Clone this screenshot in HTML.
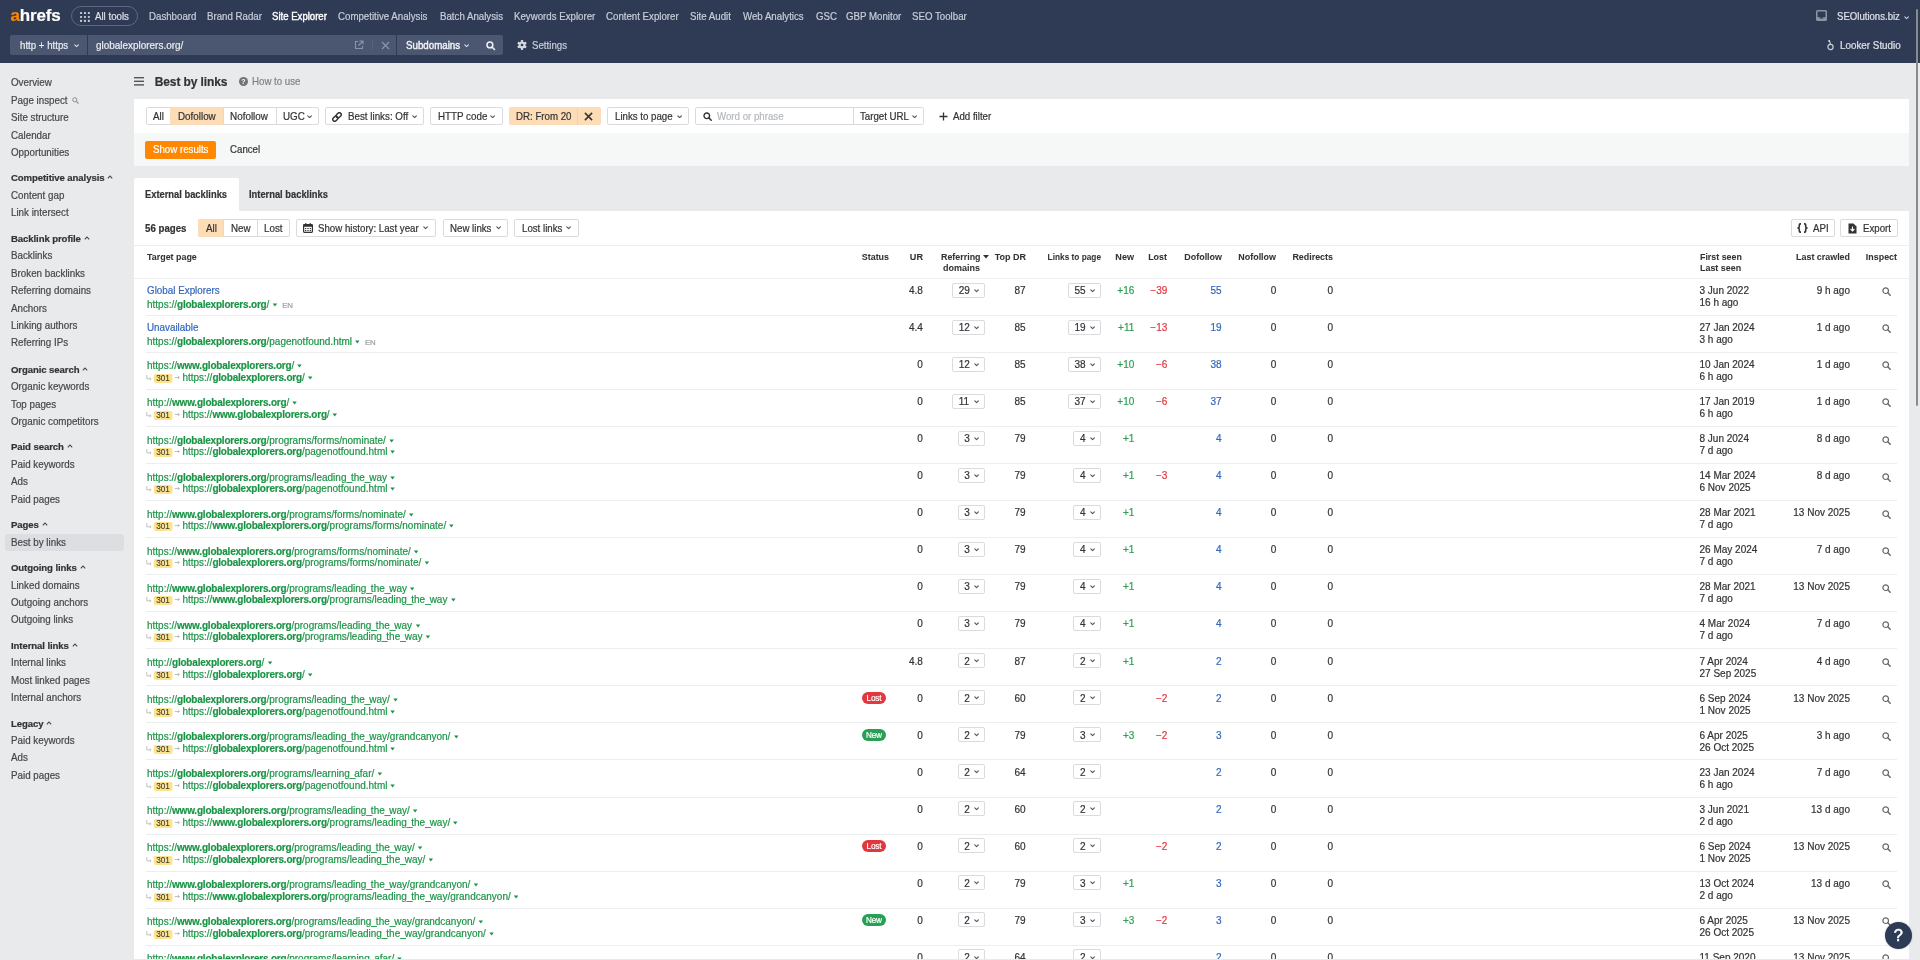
<!DOCTYPE html>
<html><head><meta charset="utf-8"><style>
html,body{margin:0;padding:0;}
body{width:1920px;height:960px;overflow:hidden;position:relative;-webkit-font-smoothing:antialiased;background:#e9eaec;font-family:"Liberation Sans",sans-serif;}
.t{position:absolute;white-space:nowrap;-webkit-text-stroke:0.2px currentColor;}
.r{position:absolute;}
b{font-weight:700;}
</style></head><body><div id="w" style="position:absolute;left:0;top:0;width:1920px;height:960px;will-change:transform;">
<div class="r" style="left:0.00px;top:0.00px;width:1920.00px;height:63.00px;background:#2f3a55;"></div>
<div class="t" style="top:9.00px;font-size:17px;line-height:14px;color:#fff;font-weight:700;letter-spacing:-0.15px;left:10.50px;"><span style="color:#ff8800">a</span>hrefs</div>
<div class="r" style="left:71.00px;top:6.00px;width:67.00px;height:20.00px;border:1px solid #5d6780;border-radius:11px;box-sizing:border-box;"></div>
<svg class="r" style="left:80.00px;top:11.50px" width="10" height="10" viewBox="0 0 10 10"><rect x="0" y="0" width="2.1" height="2.1" rx="0.7" fill="#c6cbd4"/><rect x="0" y="3.9" width="2.1" height="2.1" rx="0.7" fill="#c6cbd4"/><rect x="0" y="7.8" width="2.1" height="2.1" rx="0.7" fill="#c6cbd4"/><rect x="3.9" y="0" width="2.1" height="2.1" rx="0.7" fill="#c6cbd4"/><rect x="3.9" y="3.9" width="2.1" height="2.1" rx="0.7" fill="#c6cbd4"/><rect x="3.9" y="7.8" width="2.1" height="2.1" rx="0.7" fill="#c6cbd4"/><rect x="7.8" y="0" width="2.1" height="2.1" rx="0.7" fill="#c6cbd4"/><rect x="7.8" y="3.9" width="2.1" height="2.1" rx="0.7" fill="#c6cbd4"/><rect x="7.8" y="7.8" width="2.1" height="2.1" rx="0.7" fill="#c6cbd4"/></svg>
<div class="t" style="top:10.00px;font-size:10.2px;line-height:14px;color:#dfe2e8;left:95.00px;transform:scaleX(0.9510);transform-origin:left 50%;">All tools</div>
<div class="t" style="top:10.00px;font-size:10.2px;line-height:14px;color:#c9ced8;left:148.70px;transform:scaleX(0.9510);transform-origin:left 50%;">Dashboard</div>
<div class="t" style="top:10.00px;font-size:10.2px;line-height:14px;color:#c9ced8;left:207.00px;transform:scaleX(0.9510);transform-origin:left 50%;">Brand Radar</div>
<div class="t" style="top:10.00px;font-size:10.2px;line-height:14px;color:#ffffff;left:271.70px;transform:scaleX(0.9412);transform-origin:left 50%;-webkit-text-stroke:0.4px currentColor;">Site Explorer</div>
<div class="t" style="top:10.00px;font-size:10.2px;line-height:14px;color:#c9ced8;left:337.70px;transform:scaleX(0.9510);transform-origin:left 50%;">Competitive Analysis</div>
<div class="t" style="top:10.00px;font-size:10.2px;line-height:14px;color:#c9ced8;left:439.70px;transform:scaleX(0.9510);transform-origin:left 50%;">Batch Analysis</div>
<div class="t" style="top:10.00px;font-size:10.2px;line-height:14px;color:#c9ced8;left:514.30px;transform:scaleX(0.9510);transform-origin:left 50%;">Keywords Explorer</div>
<div class="t" style="top:10.00px;font-size:10.2px;line-height:14px;color:#c9ced8;left:606.00px;transform:scaleX(0.9510);transform-origin:left 50%;">Content Explorer</div>
<div class="t" style="top:10.00px;font-size:10.2px;line-height:14px;color:#c9ced8;left:690.30px;transform:scaleX(0.9510);transform-origin:left 50%;">Site Audit</div>
<div class="t" style="top:10.00px;font-size:10.2px;line-height:14px;color:#c9ced8;left:743.00px;transform:scaleX(0.9510);transform-origin:left 50%;">Web Analytics</div>
<div class="t" style="top:10.00px;font-size:10.2px;line-height:14px;color:#c9ced8;left:815.70px;transform:scaleX(0.9510);transform-origin:left 50%;">GSC</div>
<div class="t" style="top:10.00px;font-size:10.2px;line-height:14px;color:#c9ced8;left:846.30px;transform:scaleX(0.9510);transform-origin:left 50%;">GBP Monitor</div>
<div class="t" style="top:10.00px;font-size:10.2px;line-height:14px;color:#c9ced8;left:912.30px;transform:scaleX(0.9510);transform-origin:left 50%;">SEO Toolbar</div>
<svg class="r" style="left:1815.50px;top:10.00px" width="11" height="11" viewBox="0 0 11 11"><rect x="0.75" y="0.75" width="9.5" height="9.5" rx="0.8" fill="none" stroke="#8d94a3" stroke-width="1.5"/><rect x="0.75" y="7.2" width="9.5" height="3" fill="#8d94a3"/><rect x="3.8" y="7.2" width="3.4" height="1.3" fill="#2f3a55"/></svg>
<div class="t" style="top:10.00px;font-size:10.2px;line-height:14px;color:#dfe2e8;left:1837.00px;transform:scaleX(0.9412);transform-origin:left 50%;">SEOlutions.biz</div>
<svg class="r" style="left:1904.00px;top:16.00px" width="5.2" height="3.6" viewBox="0 0 5.2 3.6"><path d="M0.8 0.8 L2.6 2.7 L4.4 0.8" fill="none" stroke="#c9ced8" stroke-width="1.1" stroke-linecap="round" stroke-linejoin="round"/></svg>
<div class="r" style="left:10.00px;top:35.00px;width:493.00px;height:20.00px;background:#4b5670;border-radius:2px;"></div>
<div class="r" style="left:87.00px;top:35.00px;width:1.00px;height:20.00px;background:#2f3a55;"></div>
<div class="r" style="left:395.50px;top:35.00px;width:1.00px;height:20.00px;background:#2f3a55;"></div>
<div class="t" style="top:38.50px;font-size:10.2px;line-height:14px;color:#eceef2;left:19.50px;transform:scaleX(0.9510);transform-origin:left 50%;">http + https</div>
<svg class="r" style="left:74.00px;top:43.80px" width="5.2" height="3.6" viewBox="0 0 5.2 3.6"><path d="M0.8 0.8 L2.6 2.7 L4.4 0.8" fill="none" stroke="#d6dae2" stroke-width="1.1" stroke-linecap="round" stroke-linejoin="round"/></svg>
<div class="t" style="top:38.50px;font-size:10.2px;line-height:14px;color:#eceef2;left:95.80px;transform:scaleX(0.9755);transform-origin:left 50%;">globalexplorers.org/</div>
<svg class="r" style="left:354.00px;top:39.50px" width="10" height="10" viewBox="0 0 10 10"><path d="M4 1.5 H1.5 V8.5 H8.5 V6" fill="none" stroke="#8b93a6" stroke-width="1.1"/><path d="M5.5 1 H9 V4.5 M9 1 L4.5 5.5" fill="none" stroke="#8b93a6" stroke-width="1.1"/></svg>
<div class="r" style="left:372.00px;top:40.00px;width:1.00px;height:10.00px;background:#56617a;"></div>
<svg class="r" style="left:380.50px;top:40.50px" width="9" height="9" viewBox="0 0 9 9"><path d="M1 1 L8 8 M8 1 L1 8" stroke="#8b93a6" stroke-width="1.3"/></svg>
<div class="t" style="top:38.50px;font-size:10.2px;line-height:14px;color:#f2f3f6;left:405.60px;transform:scaleX(0.9559);transform-origin:left 50%;-webkit-text-stroke:0.4px currentColor;">Subdomains</div>
<svg class="r" style="left:464.00px;top:43.80px" width="5.2" height="3.6" viewBox="0 0 5.2 3.6"><path d="M0.8 0.8 L2.6 2.7 L4.4 0.8" fill="none" stroke="#d6dae2" stroke-width="1.1" stroke-linecap="round" stroke-linejoin="round"/></svg>
<svg class="r" style="left:486.00px;top:40.50px" width="10" height="10" viewBox="0 0 10 10"><circle cx="3.9" cy="3.9" r="2.9" fill="none" stroke="#eef0f4" stroke-width="1.5"/><path d="M6 6 L8.5 8.5" stroke="#eef0f4" stroke-width="1.6" stroke-linecap="round"/></svg>
<svg class="r" style="left:517.00px;top:40.00px" width="10" height="10" viewBox="0 0 10 10"><g fill="#d3d7de"><circle cx="5" cy="5" r="3.5"/><rect x="3.9" y="0.1" width="2.2" height="9.8" rx="0.4" transform="rotate(0 5 5)"/><rect x="3.9" y="0.1" width="2.2" height="9.8" rx="0.4" transform="rotate(60 5 5)"/><rect x="3.9" y="0.1" width="2.2" height="9.8" rx="0.4" transform="rotate(120 5 5)"/></g><circle cx="5" cy="5" r="1.3" fill="#2f3a55"/></svg>
<div class="t" style="top:38.50px;font-size:10.2px;line-height:14px;color:#c9ced8;left:532.00px;transform:scaleX(0.9510);transform-origin:left 50%;">Settings</div>
<svg class="r" style="left:1826.50px;top:38.50px" width="7" height="12" viewBox="0 0 7 12"><circle cx="3.5" cy="8" r="2.6" fill="none" stroke="#c9ced8" stroke-width="1.2"/><path d="M2 1 L3.5 5" stroke="#c9ced8" stroke-width="1.2"/><circle cx="2.2" cy="2" r="1" fill="#c9ced8"/></svg>
<div class="t" style="top:38.50px;font-size:10.2px;line-height:14px;color:#dfe2e8;left:1839.70px;transform:scaleX(0.9657);transform-origin:left 50%;">Looker Studio</div>
<div class="t" style="top:76.20px;font-size:10.2px;line-height:14px;color:#45474b;left:11.00px;transform:scaleX(0.9608);transform-origin:left 50%;">Overview</div>
<div class="t" style="top:93.70px;font-size:10.2px;line-height:14px;color:#45474b;left:11.00px;transform:scaleX(0.9608);transform-origin:left 50%;">Page inspect</div>
<div class="t" style="top:111.10px;font-size:10.2px;line-height:14px;color:#45474b;left:11.00px;transform:scaleX(0.9608);transform-origin:left 50%;">Site structure</div>
<div class="t" style="top:128.50px;font-size:10.2px;line-height:14px;color:#45474b;left:11.00px;transform:scaleX(0.9608);transform-origin:left 50%;">Calendar</div>
<div class="t" style="top:146.00px;font-size:10.2px;line-height:14px;color:#45474b;left:11.00px;transform:scaleX(0.9608);transform-origin:left 50%;">Opportunities</div>
<div class="t" style="top:171.30px;font-size:9.6px;line-height:14px;color:#333;font-weight:700;letter-spacing:-0.1px;left:11.00px;">Competitive analysis<svg width="6" height="4" viewBox="0 0 6 4" style="margin-left:3px;vertical-align:2px"><path d="M0.8 3.4 L3 1 L5.2 3.4" fill="none" stroke="#444" stroke-width="1.1"/></svg></div>
<div class="t" style="top:188.70px;font-size:10.2px;line-height:14px;color:#45474b;left:11.00px;transform:scaleX(0.9608);transform-origin:left 50%;">Content gap</div>
<div class="t" style="top:206.20px;font-size:10.2px;line-height:14px;color:#45474b;left:11.00px;transform:scaleX(0.9608);transform-origin:left 50%;">Link intersect</div>
<div class="t" style="top:231.70px;font-size:9.6px;line-height:14px;color:#333;font-weight:700;letter-spacing:-0.1px;left:11.00px;">Backlink profile<svg width="6" height="4" viewBox="0 0 6 4" style="margin-left:3px;vertical-align:2px"><path d="M0.8 3.4 L3 1 L5.2 3.4" fill="none" stroke="#444" stroke-width="1.1"/></svg></div>
<div class="t" style="top:249.20px;font-size:10.2px;line-height:14px;color:#45474b;left:11.00px;transform:scaleX(0.9608);transform-origin:left 50%;">Backlinks</div>
<div class="t" style="top:266.60px;font-size:10.2px;line-height:14px;color:#45474b;left:11.00px;transform:scaleX(0.9608);transform-origin:left 50%;">Broken backlinks</div>
<div class="t" style="top:284.10px;font-size:10.2px;line-height:14px;color:#45474b;left:11.00px;transform:scaleX(0.9608);transform-origin:left 50%;">Referring domains</div>
<div class="t" style="top:301.50px;font-size:10.2px;line-height:14px;color:#45474b;left:11.00px;transform:scaleX(0.9608);transform-origin:left 50%;">Anchors</div>
<div class="t" style="top:319.00px;font-size:10.2px;line-height:14px;color:#45474b;left:11.00px;transform:scaleX(0.9608);transform-origin:left 50%;">Linking authors</div>
<div class="t" style="top:336.40px;font-size:10.2px;line-height:14px;color:#45474b;left:11.00px;transform:scaleX(0.9608);transform-origin:left 50%;">Referring IPs</div>
<div class="t" style="top:362.70px;font-size:9.6px;line-height:14px;color:#333;font-weight:700;letter-spacing:-0.1px;left:11.00px;">Organic search<svg width="6" height="4" viewBox="0 0 6 4" style="margin-left:3px;vertical-align:2px"><path d="M0.8 3.4 L3 1 L5.2 3.4" fill="none" stroke="#444" stroke-width="1.1"/></svg></div>
<div class="t" style="top:380.10px;font-size:10.2px;line-height:14px;color:#45474b;left:11.00px;transform:scaleX(0.9608);transform-origin:left 50%;">Organic keywords</div>
<div class="t" style="top:397.60px;font-size:10.2px;line-height:14px;color:#45474b;left:11.00px;transform:scaleX(0.9608);transform-origin:left 50%;">Top pages</div>
<div class="t" style="top:415.00px;font-size:10.2px;line-height:14px;color:#45474b;left:11.00px;transform:scaleX(0.9608);transform-origin:left 50%;">Organic competitors</div>
<div class="t" style="top:440.30px;font-size:9.6px;line-height:14px;color:#333;font-weight:700;letter-spacing:-0.1px;left:11.00px;">Paid search<svg width="6" height="4" viewBox="0 0 6 4" style="margin-left:3px;vertical-align:2px"><path d="M0.8 3.4 L3 1 L5.2 3.4" fill="none" stroke="#444" stroke-width="1.1"/></svg></div>
<div class="t" style="top:457.80px;font-size:10.2px;line-height:14px;color:#45474b;left:11.00px;transform:scaleX(0.9608);transform-origin:left 50%;">Paid keywords</div>
<div class="t" style="top:475.20px;font-size:10.2px;line-height:14px;color:#45474b;left:11.00px;transform:scaleX(0.9608);transform-origin:left 50%;">Ads</div>
<div class="t" style="top:492.70px;font-size:10.2px;line-height:14px;color:#45474b;left:11.00px;transform:scaleX(0.9608);transform-origin:left 50%;">Paid pages</div>
<div class="t" style="top:518.00px;font-size:9.6px;line-height:14px;color:#333;font-weight:700;letter-spacing:-0.1px;left:11.00px;">Pages<svg width="6" height="4" viewBox="0 0 6 4" style="margin-left:3px;vertical-align:2px"><path d="M0.8 3.4 L3 1 L5.2 3.4" fill="none" stroke="#444" stroke-width="1.1"/></svg></div>
<div class="r" style="left:5.00px;top:534.00px;width:118.70px;height:16.70px;background:#dcdee2;border-radius:3px;"></div>
<div class="t" style="top:535.50px;font-size:10.2px;line-height:14px;color:#45474b;left:11.00px;transform:scaleX(0.9608);transform-origin:left 50%;">Best by links</div>
<div class="t" style="top:561.00px;font-size:9.6px;line-height:14px;color:#333;font-weight:700;letter-spacing:-0.1px;left:11.00px;">Outgoing links<svg width="6" height="4" viewBox="0 0 6 4" style="margin-left:3px;vertical-align:2px"><path d="M0.8 3.4 L3 1 L5.2 3.4" fill="none" stroke="#444" stroke-width="1.1"/></svg></div>
<div class="t" style="top:578.50px;font-size:10.2px;line-height:14px;color:#45474b;left:11.00px;transform:scaleX(0.9608);transform-origin:left 50%;">Linked domains</div>
<div class="t" style="top:595.90px;font-size:10.2px;line-height:14px;color:#45474b;left:11.00px;transform:scaleX(0.9608);transform-origin:left 50%;">Outgoing anchors</div>
<div class="t" style="top:613.40px;font-size:10.2px;line-height:14px;color:#45474b;left:11.00px;transform:scaleX(0.9608);transform-origin:left 50%;">Outgoing links</div>
<div class="t" style="top:638.70px;font-size:9.6px;line-height:14px;color:#333;font-weight:700;letter-spacing:-0.1px;left:11.00px;">Internal links<svg width="6" height="4" viewBox="0 0 6 4" style="margin-left:3px;vertical-align:2px"><path d="M0.8 3.4 L3 1 L5.2 3.4" fill="none" stroke="#444" stroke-width="1.1"/></svg></div>
<div class="t" style="top:656.10px;font-size:10.2px;line-height:14px;color:#45474b;left:11.00px;transform:scaleX(0.9608);transform-origin:left 50%;">Internal links</div>
<div class="t" style="top:673.60px;font-size:10.2px;line-height:14px;color:#45474b;left:11.00px;transform:scaleX(0.9608);transform-origin:left 50%;">Most linked pages</div>
<div class="t" style="top:691.00px;font-size:10.2px;line-height:14px;color:#45474b;left:11.00px;transform:scaleX(0.9608);transform-origin:left 50%;">Internal anchors</div>
<div class="t" style="top:716.50px;font-size:9.6px;line-height:14px;color:#333;font-weight:700;letter-spacing:-0.1px;left:11.00px;">Legacy<svg width="6" height="4" viewBox="0 0 6 4" style="margin-left:3px;vertical-align:2px"><path d="M0.8 3.4 L3 1 L5.2 3.4" fill="none" stroke="#444" stroke-width="1.1"/></svg></div>
<div class="t" style="top:734.00px;font-size:10.2px;line-height:14px;color:#45474b;left:11.00px;transform:scaleX(0.9608);transform-origin:left 50%;">Paid keywords</div>
<div class="t" style="top:751.40px;font-size:10.2px;line-height:14px;color:#45474b;left:11.00px;transform:scaleX(0.9608);transform-origin:left 50%;">Ads</div>
<div class="t" style="top:768.90px;font-size:10.2px;line-height:14px;color:#45474b;left:11.00px;transform:scaleX(0.9608);transform-origin:left 50%;">Paid pages</div>
<svg class="r" style="left:72.00px;top:97.00px" width="7" height="7" viewBox="0 0 7 7"><circle cx="2.8" cy="2.8" r="2.1" fill="none" stroke="#8a8d92" stroke-width="1"/><path d="M4.4 4.4 L6.5 6.5" stroke="#8a8d92" stroke-width="1.1"/></svg>
<svg class="r" style="left:134.00px;top:77.00px" width="10" height="9" viewBox="0 0 10 9"><rect x="0" y="0" width="10" height="1.4" fill="#555"/><rect x="0" y="3.6" width="10" height="1.4" fill="#555"/><rect x="0" y="7.2" width="10" height="1.4" fill="#555"/></svg>
<div class="t" style="top:75.00px;font-size:12px;line-height:14px;color:#333;font-weight:700;letter-spacing:-0.1px;left:154.70px;">Best by links</div>
<svg class="r" style="left:239.00px;top:77.00px" width="9" height="9" viewBox="0 0 9 9"><circle cx="4.5" cy="4.5" r="4.5" fill="#707378"/><text x="4.5" y="7.3" font-size="7" font-weight="700" text-anchor="middle" fill="#fff" font-family="Liberation Sans">?</text></svg>
<div class="t" style="top:75.00px;font-size:10.2px;line-height:14px;color:#7f8287;left:252.40px;transform:scaleX(0.9510);transform-origin:left 50%;">How to use</div>
<div class="r" style="left:134.30px;top:99.00px;width:1774.70px;height:34.00px;background:#fff;"></div>
<div class="r" style="left:134.30px;top:133.00px;width:1774.70px;height:32.70px;background:#f6f7f7;"></div>
<div class="r" style="left:145.50px;top:107.20px;width:173.80px;height:17.60px;background:#fff;border-radius:2px;border:1px solid #d9dbde;box-sizing:border-box;"></div>
<div class="r" style="left:170.20px;top:107.20px;width:52.80px;height:17.60px;background:#fddcb8;"></div>
<div class="r" style="left:223.00px;top:108.00px;width:1.00px;height:16.30px;background:#d9dbde;"></div>
<div class="r" style="left:275.60px;top:108.00px;width:1.00px;height:16.30px;background:#d9dbde;"></div>
<div class="t" style="top:110.00px;font-size:10.2px;line-height:14px;color:#333;left:153.00px;transform:scaleX(0.9608);transform-origin:left 50%;">All</div>
<div class="t" style="top:110.00px;font-size:10.2px;line-height:14px;color:#333;left:177.70px;transform:scaleX(0.9657);transform-origin:left 50%;">Dofollow</div>
<div class="t" style="top:110.00px;font-size:10.2px;line-height:14px;color:#333;left:230.10px;transform:scaleX(0.9706);transform-origin:left 50%;">Nofollow</div>
<div class="t" style="top:110.00px;font-size:10.2px;line-height:14px;color:#333;left:282.90px;transform:scaleX(0.9608);transform-origin:left 50%;">UGC</div>
<svg class="r" style="left:307.00px;top:114.80px" width="5.2" height="3.6" viewBox="0 0 5.2 3.6"><path d="M0.8 0.8 L2.6 2.7 L4.4 0.8" fill="none" stroke="#555" stroke-width="1.1" stroke-linecap="round" stroke-linejoin="round"/></svg>
<div class="r" style="left:325.30px;top:107.20px;width:99.00px;height:17.60px;background:#fff;border-radius:2px;border:1px solid #d9dbde;box-sizing:border-box;"></div>
<svg class="r" style="left:332.30px;top:111.50px" width="10" height="10" viewBox="0 0 10 10"><g transform="rotate(-45 5 5)" fill="none" stroke="#333" stroke-width="1.45"><rect x="-0.2" y="3.1" width="5.6" height="3.8" rx="1.9"/><rect x="4.6" y="3.1" width="5.6" height="3.8" rx="1.9"/></g></svg>
<div class="t" style="top:110.00px;font-size:10.2px;line-height:14px;color:#333;left:347.50px;transform:scaleX(0.9608);transform-origin:left 50%;">Best links: Off</div>
<svg class="r" style="left:412.00px;top:114.80px" width="5.2" height="3.6" viewBox="0 0 5.2 3.6"><path d="M0.8 0.8 L2.6 2.7 L4.4 0.8" fill="none" stroke="#555" stroke-width="1.1" stroke-linecap="round" stroke-linejoin="round"/></svg>
<div class="r" style="left:430.30px;top:107.20px;width:72.60px;height:17.60px;background:#fff;border-radius:2px;border:1px solid #d9dbde;box-sizing:border-box;"></div>
<div class="t" style="top:110.00px;font-size:10.2px;line-height:14px;color:#333;left:437.50px;transform:scaleX(0.9608);transform-origin:left 50%;">HTTP code</div>
<svg class="r" style="left:490.00px;top:114.80px" width="5.2" height="3.6" viewBox="0 0 5.2 3.6"><path d="M0.8 0.8 L2.6 2.7 L4.4 0.8" fill="none" stroke="#555" stroke-width="1.1" stroke-linecap="round" stroke-linejoin="round"/></svg>
<div class="r" style="left:508.90px;top:107.20px;width:92.50px;height:17.60px;background:#fddcb8;border-radius:2px;"></div>
<div class="r" style="left:577.40px;top:107.50px;width:1.00px;height:17.30px;background:#f6d0a4;"></div>
<div class="t" style="top:110.00px;font-size:10.2px;line-height:14px;color:#333;left:516.00px;transform:scaleX(0.9510);transform-origin:left 50%;">DR: From 20</div>
<svg class="r" style="left:584.30px;top:111.80px" width="9" height="9" viewBox="0 0 9 9"><path d="M0.9 0.9 L8.1 8.1 M8.1 0.9 L0.9 8.1" stroke="#333" stroke-width="1.5"/></svg>
<div class="r" style="left:607.30px;top:107.20px;width:82.10px;height:17.60px;background:#fff;border-radius:2px;border:1px solid #d9dbde;box-sizing:border-box;"></div>
<div class="t" style="top:110.00px;font-size:10.2px;line-height:14px;color:#333;left:614.50px;transform:scaleX(0.9510);transform-origin:left 50%;">Links to page</div>
<svg class="r" style="left:677.00px;top:114.80px" width="5.2" height="3.6" viewBox="0 0 5.2 3.6"><path d="M0.8 0.8 L2.6 2.7 L4.4 0.8" fill="none" stroke="#555" stroke-width="1.1" stroke-linecap="round" stroke-linejoin="round"/></svg>
<div class="r" style="left:695.40px;top:107.20px;width:229.10px;height:17.60px;background:#fff;border-radius:2px;border:1px solid #d9dbde;box-sizing:border-box;"></div>
<div class="r" style="left:852.60px;top:108.00px;width:1.00px;height:16.30px;background:#d9dbde;"></div>
<svg class="r" style="left:703.00px;top:111.50px" width="9" height="9" viewBox="0 0 9 9"><circle cx="3.8" cy="3.8" r="2.8" fill="none" stroke="#333" stroke-width="1.4"/><path d="M5.9 5.9 L8.2 8.2" stroke="#333" stroke-width="1.5" stroke-linecap="round"/></svg>
<div class="t" style="top:110.00px;font-size:10.2px;line-height:14px;color:#b5b8bc;left:717.00px;transform:scaleX(0.9510);transform-origin:left 50%;">Word or phrase</div>
<div class="t" style="top:110.00px;font-size:10.2px;line-height:14px;color:#333;left:859.50px;transform:scaleX(0.9510);transform-origin:left 50%;">Target URL</div>
<svg class="r" style="left:912.00px;top:114.80px" width="5.2" height="3.6" viewBox="0 0 5.2 3.6"><path d="M0.8 0.8 L2.6 2.7 L4.4 0.8" fill="none" stroke="#555" stroke-width="1.1" stroke-linecap="round" stroke-linejoin="round"/></svg>
<svg class="r" style="left:938.50px;top:111.50px" width="9" height="9" viewBox="0 0 9 9"><path d="M4.5 0.5 V8.5 M0.5 4.5 H8.5" stroke="#333" stroke-width="1.3"/></svg>
<div class="t" style="top:110.00px;font-size:10.2px;line-height:14px;color:#333;left:952.90px;transform:scaleX(0.9510);transform-origin:left 50%;">Add filter</div>
<div class="r" style="left:144.90px;top:141.00px;width:71.20px;height:17.90px;background:#ff8800;border-radius:2px;"></div>
<div class="t" style="top:143.40px;font-size:10.2px;line-height:14px;color:#fff;left:152.80px;transform:scaleX(0.9510);transform-origin:left 50%;">Show results</div>
<div class="t" style="top:143.40px;font-size:10.2px;line-height:14px;color:#333;left:230.30px;transform:scaleX(0.9510);transform-origin:left 50%;">Cancel</div>
<div class="r" style="left:134.30px;top:177.50px;width:104.40px;height:34.00px;background:#fff;border-radius:2px 2px 0 0;"></div>
<div class="t" style="top:188.10px;font-size:10.2px;line-height:14px;color:#333;font-weight:700;left:145.10px;transform:scaleX(0.9171);transform-origin:left 50%;">External backlinks</div>
<div class="t" style="top:188.10px;font-size:10.2px;line-height:14px;color:#333;font-weight:700;left:249.30px;transform:scaleX(0.9161);transform-origin:left 50%;">Internal backlinks</div>
<div class="r" style="left:134.30px;top:210.60px;width:1774.70px;height:760.00px;background:#fff;"></div>
<div class="t" style="top:222.00px;font-size:10.2px;line-height:14px;color:#333;font-weight:700;left:145.00px;transform:scaleX(0.9516);transform-origin:left 50%;">56 pages</div>
<div class="r" style="left:197.90px;top:218.80px;width:92.30px;height:17.90px;background:#fff;border-radius:2px;border:1px solid #d9dbde;box-sizing:border-box;"></div>
<div class="r" style="left:197.90px;top:218.80px;width:25.30px;height:17.90px;background:#fddcb8;border-radius:2px 0 0 2px;"></div>
<div class="r" style="left:223.20px;top:219.80px;width:1.00px;height:15.90px;background:#d9dbde;"></div>
<div class="r" style="left:257.00px;top:219.80px;width:1.00px;height:15.90px;background:#d9dbde;"></div>
<div class="t" style="top:222.00px;font-size:10.2px;line-height:14px;color:#333;left:205.50px;transform:scaleX(0.9608);transform-origin:left 50%;">All</div>
<div class="t" style="top:222.00px;font-size:10.2px;line-height:14px;color:#333;left:230.50px;transform:scaleX(0.9608);transform-origin:left 50%;">New</div>
<div class="t" style="top:222.00px;font-size:10.2px;line-height:14px;color:#333;left:264.00px;transform:scaleX(0.9608);transform-origin:left 50%;">Lost</div>
<div class="r" style="left:295.90px;top:218.80px;width:140.60px;height:17.90px;background:#fff;border-radius:2px;border:1px solid #d9dbde;box-sizing:border-box;"></div>
<svg class="r" style="left:303.00px;top:222.50px" width="10" height="10" viewBox="0 0 10 10"><rect x="0.6" y="1.6" width="8.8" height="7.8" rx="0.8" fill="none" stroke="#333" stroke-width="1.2"/><rect x="0.6" y="1.6" width="8.8" height="2.2" fill="#333"/><path d="M2.8 0 V2 M7.2 0 V2" stroke="#333" stroke-width="1.1"/><g fill="#333"><rect x="2" y="5" width="1.3" height="1.1"/><rect x="4.35" y="5" width="1.3" height="1.1"/><rect x="6.7" y="5" width="1.3" height="1.1"/><rect x="2" y="7" width="1.3" height="1.1"/><rect x="4.35" y="7" width="1.3" height="1.1"/><rect x="6.7" y="7" width="1.3" height="1.1"/></g></svg>
<div class="t" style="top:222.00px;font-size:10.2px;line-height:14px;color:#333;left:318.00px;transform:scaleX(0.9510);transform-origin:left 50%;">Show history: Last year</div>
<svg class="r" style="left:423.00px;top:226.30px" width="5.2" height="3.6" viewBox="0 0 5.2 3.6"><path d="M0.8 0.8 L2.6 2.7 L4.4 0.8" fill="none" stroke="#555" stroke-width="1.1" stroke-linecap="round" stroke-linejoin="round"/></svg>
<div class="r" style="left:442.50px;top:218.80px;width:65.60px;height:17.90px;background:#fff;border-radius:2px;border:1px solid #d9dbde;box-sizing:border-box;"></div>
<div class="t" style="top:222.00px;font-size:10.2px;line-height:14px;color:#333;left:449.50px;transform:scaleX(0.9510);transform-origin:left 50%;">New links</div>
<svg class="r" style="left:496.00px;top:226.30px" width="5.2" height="3.6" viewBox="0 0 5.2 3.6"><path d="M0.8 0.8 L2.6 2.7 L4.4 0.8" fill="none" stroke="#555" stroke-width="1.1" stroke-linecap="round" stroke-linejoin="round"/></svg>
<div class="r" style="left:514.40px;top:218.80px;width:64.30px;height:17.90px;background:#fff;border-radius:2px;border:1px solid #d9dbde;box-sizing:border-box;"></div>
<div class="t" style="top:222.00px;font-size:10.2px;line-height:14px;color:#333;left:521.50px;transform:scaleX(0.9510);transform-origin:left 50%;">Lost links</div>
<svg class="r" style="left:566.00px;top:226.30px" width="5.2" height="3.6" viewBox="0 0 5.2 3.6"><path d="M0.8 0.8 L2.6 2.7 L4.4 0.8" fill="none" stroke="#555" stroke-width="1.1" stroke-linecap="round" stroke-linejoin="round"/></svg>
<div class="r" style="left:1790.50px;top:219.00px;width:44.20px;height:17.60px;background:#fff;border-radius:2px;border:1px solid #d9dbde;box-sizing:border-box;"></div>
<svg class="r" style="left:1797.00px;top:223.00px" width="11" height="10" viewBox="0 0 11 10"><path d="M4 0.9 H3.3 Q2.3 0.9 2.3 2 V3.7 Q2.3 4.6 1 5 Q2.3 5.4 2.3 6.3 V8 Q2.3 9.1 3.3 9.1 H4 M7 0.9 H7.7 Q8.7 0.9 8.7 2 V3.7 Q8.7 4.6 10 5 Q8.7 5.4 8.7 6.3 V8 Q8.7 9.1 7.7 9.1 H7" fill="none" stroke="#333" stroke-width="1.6" stroke-linejoin="round"/></svg>
<div class="t" style="top:222.00px;font-size:10.2px;line-height:14px;color:#333;left:1812.50px;transform:scaleX(0.9510);transform-origin:left 50%;">API</div>
<div class="r" style="left:1840.30px;top:219.00px;width:57.70px;height:17.60px;background:#fff;border-radius:2px;border:1px solid #d9dbde;box-sizing:border-box;"></div>
<svg class="r" style="left:1848.00px;top:222.50px" width="9" height="11" viewBox="0 0 9 11"><path d="M0.5 0.5 H5.5 L8.5 3.5 V10.5 H0.5 Z" fill="#333"/><path d="M4.5 3.5 V7.8 M2.6 6 L4.5 7.9 L6.4 6" fill="none" stroke="#fff" stroke-width="1.1"/></svg>
<div class="t" style="top:222.00px;font-size:10.2px;line-height:14px;color:#333;left:1862.50px;transform:scaleX(0.9510);transform-origin:left 50%;">Export</div>
<div class="r" style="left:134.30px;top:244.70px;width:1774.70px;height:1.20px;background:#eceef0;"></div>
<div class="r" style="left:134.30px;top:278.10px;width:1774.70px;height:1.20px;background:#eceef0;"></div>
<div class="t" style="top:250.40px;font-size:9.6px;line-height:14px;color:#333;font-weight:700;left:146.70px;transform:scaleX(0.9283);transform-origin:left 50%;-webkit-text-stroke:0.05px currentColor;">Target page</div>
<div class="t" style="top:250.40px;font-size:9.6px;line-height:14px;color:#333;font-weight:700;left:288.50px;width:600px;text-align:right;transform:scaleX(0.9284);transform-origin:right 50%;-webkit-text-stroke:0.05px currentColor;">Status</div>
<div class="t" style="top:250.40px;font-size:9.6px;line-height:14px;color:#333;font-weight:700;left:323.30px;width:600px;text-align:right;transform:scaleX(0.9495);transform-origin:right 50%;-webkit-text-stroke:0.05px currentColor;">UR</div>
<div class="t" style="top:250.40px;font-size:9.6px;line-height:14px;color:#333;font-weight:700;left:940.90px;transform:scaleX(0.9262);transform-origin:left 50%;-webkit-text-stroke:0.05px currentColor;">Referring</div>
<svg class="r" style="left:982.50px;top:255.00px" width="6" height="4" viewBox="0 0 6 4"><path d="M0 0 H6 L3 3.5 Z" fill="#333"/></svg>
<div class="t" style="top:260.50px;font-size:9.6px;line-height:14px;color:#333;font-weight:700;left:379.70px;width:600px;text-align:right;transform:scaleX(0.9379);transform-origin:right 50%;-webkit-text-stroke:0.05px currentColor;">domains</div>
<div class="t" style="top:250.40px;font-size:9.6px;line-height:14px;color:#333;font-weight:700;left:425.80px;width:600px;text-align:right;transform:scaleX(0.9371);transform-origin:right 50%;-webkit-text-stroke:0.05px currentColor;">Top DR</div>
<div class="t" style="top:250.40px;font-size:9.6px;line-height:14px;color:#333;font-weight:700;left:501.00px;width:600px;text-align:right;transform:scaleX(0.8634);transform-origin:right 50%;-webkit-text-stroke:0.05px currentColor;">Links to page</div>
<div class="t" style="top:250.40px;font-size:9.6px;line-height:14px;color:#333;font-weight:700;left:534.30px;width:600px;text-align:right;transform:scaleX(0.9468);transform-origin:right 50%;-webkit-text-stroke:0.05px currentColor;">New</div>
<div class="t" style="top:250.40px;font-size:9.6px;line-height:14px;color:#333;font-weight:700;left:567.30px;width:600px;text-align:right;transform:scaleX(0.9309);transform-origin:right 50%;-webkit-text-stroke:0.05px currentColor;">Lost</div>
<div class="t" style="top:250.40px;font-size:9.6px;line-height:14px;color:#333;font-weight:700;left:621.50px;width:600px;text-align:right;transform:scaleX(0.9309);transform-origin:right 50%;-webkit-text-stroke:0.05px currentColor;">Dofollow</div>
<div class="t" style="top:250.40px;font-size:9.6px;line-height:14px;color:#333;font-weight:700;left:676.20px;width:600px;text-align:right;transform:scaleX(0.9309);transform-origin:right 50%;-webkit-text-stroke:0.05px currentColor;">Nofollow</div>
<div class="t" style="top:250.40px;font-size:9.6px;line-height:14px;color:#333;font-weight:700;left:733.00px;width:600px;text-align:right;transform:scaleX(0.9280);transform-origin:right 50%;-webkit-text-stroke:0.05px currentColor;">Redirects</div>
<div class="t" style="top:250.40px;font-size:9.6px;line-height:14px;color:#333;font-weight:700;left:1699.50px;transform:scaleX(0.9228);transform-origin:left 50%;-webkit-text-stroke:0.05px currentColor;">First seen</div>
<div class="t" style="top:260.50px;font-size:9.6px;line-height:14px;color:#333;font-weight:700;left:1699.50px;transform:scaleX(0.9289);transform-origin:left 50%;-webkit-text-stroke:0.05px currentColor;">Last seen</div>
<div class="t" style="top:250.40px;font-size:9.6px;line-height:14px;color:#333;font-weight:700;left:1250.00px;width:600px;text-align:right;transform:scaleX(0.9278);transform-origin:right 50%;-webkit-text-stroke:0.05px currentColor;">Last crawled</div>
<div class="t" style="top:250.40px;font-size:9.6px;line-height:14px;color:#333;font-weight:700;left:1296.70px;width:600px;text-align:right;transform:scaleX(0.9271);transform-origin:right 50%;-webkit-text-stroke:0.05px currentColor;">Inspect</div>
<div class="t" style="top:284.10px;font-size:10.2px;line-height:14px;color:#3467bd;left:146.70px;transform:scaleX(0.9657);transform-origin:left 50%;">Global Explorers</div>
<div class="t" style="top:297.60px;font-size:10.2px;line-height:14px;color:#1b9446;left:146.70px;transform:scaleX(0.9804);transform-origin:left 50%;">https://<b style="letter-spacing:-0.2px">globalexplorers.org</b>/<svg width="5" height="4" viewBox="0 0 5 4" style="margin-left:3.2px;vertical-align:1px"><path d="M0.2 0.4 H4.8 L2.5 3.5 Z" fill="#1b9446"/></svg><span style="font-size:8px;color:#9a9da2;margin-left:5px;letter-spacing:-0.2px">EN</span></div>
<div class="t" style="top:284.20px;font-size:10.0px;line-height:14px;color:#333;left:322.90px;width:600px;text-align:right;">4.8</div>
<div class="r" style="left:952.08px;top:282.80px;width:33.12px;height:14.80px;border:1px solid #d9dbde;border-radius:2px;box-sizing:border-box;background:#fff;"></div>
<div class="t" style="top:284.20px;font-size:10.0px;line-height:14px;color:#333;left:958.68px;">29</div>
<svg class="r" style="left:974.20px;top:289.00px" width="5.2" height="3.6" viewBox="0 0 5.2 3.6"><path d="M0.8 0.8 L2.6 2.7 L4.4 0.8" fill="none" stroke="#555" stroke-width="1.1" stroke-linecap="round" stroke-linejoin="round"/></svg>
<div class="t" style="top:284.20px;font-size:10.0px;line-height:14px;color:#333;left:425.50px;width:600px;text-align:right;">87</div>
<div class="r" style="left:1067.88px;top:282.80px;width:33.12px;height:14.80px;border:1px solid #d9dbde;border-radius:2px;box-sizing:border-box;background:#fff;"></div>
<div class="t" style="top:284.20px;font-size:10.0px;line-height:14px;color:#333;left:1074.48px;">55</div>
<svg class="r" style="left:1090.00px;top:289.00px" width="5.2" height="3.6" viewBox="0 0 5.2 3.6"><path d="M0.8 0.8 L2.6 2.7 L4.4 0.8" fill="none" stroke="#555" stroke-width="1.1" stroke-linecap="round" stroke-linejoin="round"/></svg>
<div class="t" style="top:284.20px;font-size:10.0px;line-height:14px;color:#2ea052;left:534.30px;width:600px;text-align:right;">+16</div>
<div class="t" style="top:284.20px;font-size:10.0px;line-height:14px;color:#e0383e;left:567.30px;width:600px;text-align:right;">−39</div>
<div class="t" style="top:284.20px;font-size:10.0px;line-height:14px;color:#3467bd;left:621.50px;width:600px;text-align:right;">55</div>
<div class="t" style="top:284.20px;font-size:10.0px;line-height:14px;color:#333;left:676.20px;width:600px;text-align:right;">0</div>
<div class="t" style="top:284.20px;font-size:10.0px;line-height:14px;color:#333;left:733.00px;width:600px;text-align:right;">0</div>
<div class="t" style="top:284.20px;font-size:10.0px;line-height:14px;color:#333;left:1699.50px;">3 Jun 2022</div>
<div class="t" style="top:296.20px;font-size:10.0px;line-height:14px;color:#333;left:1699.50px;">16 h ago</div>
<div class="t" style="top:284.20px;font-size:10.0px;line-height:14px;color:#333;left:1250.00px;width:600px;text-align:right;">9 h ago</div>
<svg class="r" style="left:1882.00px;top:287.40px" width="9" height="9" viewBox="0 0 9 9"><circle cx="3.7" cy="3.7" r="2.8" fill="none" stroke="#666" stroke-width="1.2"/><path d="M5.8 5.8 L8.2 8.2" stroke="#666" stroke-width="1.4" stroke-linecap="round"/></svg>
<div class="r" style="left:146.20px;top:315.13px;width:1751.00px;height:1.00px;background:#eceef0;"></div>
<div class="t" style="top:321.13px;font-size:10.2px;line-height:14px;color:#3467bd;left:146.70px;transform:scaleX(0.9657);transform-origin:left 50%;">Unavailable</div>
<div class="t" style="top:334.63px;font-size:10.2px;line-height:14px;color:#1b9446;left:146.70px;transform:scaleX(0.9804);transform-origin:left 50%;">https://<b style="letter-spacing:-0.2px">globalexplorers.org</b>/pagenotfound.html<svg width="5" height="4" viewBox="0 0 5 4" style="margin-left:3.2px;vertical-align:1px"><path d="M0.2 0.4 H4.8 L2.5 3.5 Z" fill="#1b9446"/></svg><span style="font-size:8px;color:#9a9da2;margin-left:5px;letter-spacing:-0.2px">EN</span></div>
<div class="t" style="top:321.23px;font-size:10.0px;line-height:14px;color:#333;left:322.90px;width:600px;text-align:right;">4.4</div>
<div class="r" style="left:952.08px;top:319.83px;width:33.12px;height:14.80px;border:1px solid #d9dbde;border-radius:2px;box-sizing:border-box;background:#fff;"></div>
<div class="t" style="top:321.23px;font-size:10.0px;line-height:14px;color:#333;left:958.68px;">12</div>
<svg class="r" style="left:974.20px;top:326.03px" width="5.2" height="3.6" viewBox="0 0 5.2 3.6"><path d="M0.8 0.8 L2.6 2.7 L4.4 0.8" fill="none" stroke="#555" stroke-width="1.1" stroke-linecap="round" stroke-linejoin="round"/></svg>
<div class="t" style="top:321.23px;font-size:10.0px;line-height:14px;color:#333;left:425.50px;width:600px;text-align:right;">85</div>
<div class="r" style="left:1067.88px;top:319.83px;width:33.12px;height:14.80px;border:1px solid #d9dbde;border-radius:2px;box-sizing:border-box;background:#fff;"></div>
<div class="t" style="top:321.23px;font-size:10.0px;line-height:14px;color:#333;left:1074.48px;">19</div>
<svg class="r" style="left:1090.00px;top:326.03px" width="5.2" height="3.6" viewBox="0 0 5.2 3.6"><path d="M0.8 0.8 L2.6 2.7 L4.4 0.8" fill="none" stroke="#555" stroke-width="1.1" stroke-linecap="round" stroke-linejoin="round"/></svg>
<div class="t" style="top:321.23px;font-size:10.0px;line-height:14px;color:#2ea052;left:534.30px;width:600px;text-align:right;">+11</div>
<div class="t" style="top:321.23px;font-size:10.0px;line-height:14px;color:#e0383e;left:567.30px;width:600px;text-align:right;">−13</div>
<div class="t" style="top:321.23px;font-size:10.0px;line-height:14px;color:#3467bd;left:621.50px;width:600px;text-align:right;">19</div>
<div class="t" style="top:321.23px;font-size:10.0px;line-height:14px;color:#333;left:676.20px;width:600px;text-align:right;">0</div>
<div class="t" style="top:321.23px;font-size:10.0px;line-height:14px;color:#333;left:733.00px;width:600px;text-align:right;">0</div>
<div class="t" style="top:321.23px;font-size:10.0px;line-height:14px;color:#333;left:1699.50px;">27 Jan 2024</div>
<div class="t" style="top:333.23px;font-size:10.0px;line-height:14px;color:#333;left:1699.50px;">3 h ago</div>
<div class="t" style="top:321.23px;font-size:10.0px;line-height:14px;color:#333;left:1250.00px;width:600px;text-align:right;">1 d ago</div>
<svg class="r" style="left:1882.00px;top:324.43px" width="9" height="9" viewBox="0 0 9 9"><circle cx="3.7" cy="3.7" r="2.8" fill="none" stroke="#666" stroke-width="1.2"/><path d="M5.8 5.8 L8.2 8.2" stroke="#666" stroke-width="1.4" stroke-linecap="round"/></svg>
<div class="r" style="left:146.20px;top:352.16px;width:1751.00px;height:1.00px;background:#eceef0;"></div>
<div class="t" style="top:359.46px;font-size:10.2px;line-height:14px;color:#1b9446;left:146.70px;transform:scaleX(0.9804);transform-origin:left 50%;">https://<b style="letter-spacing:-0.2px">www.globalexplorers.org</b>/<svg width="5" height="4" viewBox="0 0 5 4" style="margin-left:3.2px;vertical-align:1px"><path d="M0.2 0.4 H4.8 L2.5 3.5 Z" fill="#1b9446"/></svg></div>
<div class="t" style="top:371.26px;font-size:10.2px;line-height:14px;color:#1b9446;left:146.20px;transform:scaleX(0.9804);transform-origin:left 50%;"><svg width="6" height="6" viewBox="0 0 6 6" style="vertical-align:0px;margin-right:2.2px"><path d="M0.8 0 V3.8 H5" fill="none" stroke="#b7babe" stroke-width="0.9"/><path d="M3.8 2.6 L5.2 3.8 L3.8 5" fill="none" stroke="#b7babe" stroke-width="0.9"/></svg><span style="display:inline-block;background:#fce38c;color:#3a3a3a;border-radius:2px;font-size:8.4px;line-height:9px;padding:0 2.2px;vertical-align:0px;margin-right:2.4px;-webkit-text-stroke:0.1px currentColor">301</span><svg width="6" height="5" viewBox="0 0 6 5" style="vertical-align:1px;margin-right:2.2px"><path d="M0 2.5 H5 M3.5 1 L5 2.5 L3.5 4" fill="none" stroke="#b7babe" stroke-width="0.9"/></svg>https://<b style="letter-spacing:-0.2px">globalexplorers.org</b>/<svg width="5" height="4" viewBox="0 0 5 4" style="margin-left:3.2px;vertical-align:1px"><path d="M0.2 0.4 H4.8 L2.5 3.5 Z" fill="#1b9446"/></svg></div>
<div class="t" style="top:358.26px;font-size:10.0px;line-height:14px;color:#333;left:322.90px;width:600px;text-align:right;">0</div>
<div class="r" style="left:952.08px;top:356.86px;width:33.12px;height:14.80px;border:1px solid #d9dbde;border-radius:2px;box-sizing:border-box;background:#fff;"></div>
<div class="t" style="top:358.26px;font-size:10.0px;line-height:14px;color:#333;left:958.68px;">12</div>
<svg class="r" style="left:974.20px;top:363.06px" width="5.2" height="3.6" viewBox="0 0 5.2 3.6"><path d="M0.8 0.8 L2.6 2.7 L4.4 0.8" fill="none" stroke="#555" stroke-width="1.1" stroke-linecap="round" stroke-linejoin="round"/></svg>
<div class="t" style="top:358.26px;font-size:10.0px;line-height:14px;color:#333;left:425.50px;width:600px;text-align:right;">85</div>
<div class="r" style="left:1067.88px;top:356.86px;width:33.12px;height:14.80px;border:1px solid #d9dbde;border-radius:2px;box-sizing:border-box;background:#fff;"></div>
<div class="t" style="top:358.26px;font-size:10.0px;line-height:14px;color:#333;left:1074.48px;">38</div>
<svg class="r" style="left:1090.00px;top:363.06px" width="5.2" height="3.6" viewBox="0 0 5.2 3.6"><path d="M0.8 0.8 L2.6 2.7 L4.4 0.8" fill="none" stroke="#555" stroke-width="1.1" stroke-linecap="round" stroke-linejoin="round"/></svg>
<div class="t" style="top:358.26px;font-size:10.0px;line-height:14px;color:#2ea052;left:534.30px;width:600px;text-align:right;">+10</div>
<div class="t" style="top:358.26px;font-size:10.0px;line-height:14px;color:#e0383e;left:567.30px;width:600px;text-align:right;">−6</div>
<div class="t" style="top:358.26px;font-size:10.0px;line-height:14px;color:#3467bd;left:621.50px;width:600px;text-align:right;">38</div>
<div class="t" style="top:358.26px;font-size:10.0px;line-height:14px;color:#333;left:676.20px;width:600px;text-align:right;">0</div>
<div class="t" style="top:358.26px;font-size:10.0px;line-height:14px;color:#333;left:733.00px;width:600px;text-align:right;">0</div>
<div class="t" style="top:358.26px;font-size:10.0px;line-height:14px;color:#333;left:1699.50px;">10 Jan 2024</div>
<div class="t" style="top:370.26px;font-size:10.0px;line-height:14px;color:#333;left:1699.50px;">6 h ago</div>
<div class="t" style="top:358.26px;font-size:10.0px;line-height:14px;color:#333;left:1250.00px;width:600px;text-align:right;">1 d ago</div>
<svg class="r" style="left:1882.00px;top:361.46px" width="9" height="9" viewBox="0 0 9 9"><circle cx="3.7" cy="3.7" r="2.8" fill="none" stroke="#666" stroke-width="1.2"/><path d="M5.8 5.8 L8.2 8.2" stroke="#666" stroke-width="1.4" stroke-linecap="round"/></svg>
<div class="r" style="left:146.20px;top:389.19px;width:1751.00px;height:1.00px;background:#eceef0;"></div>
<div class="t" style="top:396.49px;font-size:10.2px;line-height:14px;color:#1b9446;left:146.70px;transform:scaleX(0.9804);transform-origin:left 50%;">http://<b style="letter-spacing:-0.2px">www.globalexplorers.org</b>/<svg width="5" height="4" viewBox="0 0 5 4" style="margin-left:3.2px;vertical-align:1px"><path d="M0.2 0.4 H4.8 L2.5 3.5 Z" fill="#1b9446"/></svg></div>
<div class="t" style="top:408.29px;font-size:10.2px;line-height:14px;color:#1b9446;left:146.20px;transform:scaleX(0.9804);transform-origin:left 50%;"><svg width="6" height="6" viewBox="0 0 6 6" style="vertical-align:0px;margin-right:2.2px"><path d="M0.8 0 V3.8 H5" fill="none" stroke="#b7babe" stroke-width="0.9"/><path d="M3.8 2.6 L5.2 3.8 L3.8 5" fill="none" stroke="#b7babe" stroke-width="0.9"/></svg><span style="display:inline-block;background:#fce38c;color:#3a3a3a;border-radius:2px;font-size:8.4px;line-height:9px;padding:0 2.2px;vertical-align:0px;margin-right:2.4px;-webkit-text-stroke:0.1px currentColor">301</span><svg width="6" height="5" viewBox="0 0 6 5" style="vertical-align:1px;margin-right:2.2px"><path d="M0 2.5 H5 M3.5 1 L5 2.5 L3.5 4" fill="none" stroke="#b7babe" stroke-width="0.9"/></svg>https://<b style="letter-spacing:-0.2px">www.globalexplorers.org</b>/<svg width="5" height="4" viewBox="0 0 5 4" style="margin-left:3.2px;vertical-align:1px"><path d="M0.2 0.4 H4.8 L2.5 3.5 Z" fill="#1b9446"/></svg></div>
<div class="t" style="top:395.29px;font-size:10.0px;line-height:14px;color:#333;left:322.90px;width:600px;text-align:right;">0</div>
<div class="r" style="left:952.08px;top:393.89px;width:33.12px;height:14.80px;border:1px solid #d9dbde;border-radius:2px;box-sizing:border-box;background:#fff;"></div>
<div class="t" style="top:395.29px;font-size:10.0px;line-height:14px;color:#333;left:958.68px;">11</div>
<svg class="r" style="left:974.20px;top:400.09px" width="5.2" height="3.6" viewBox="0 0 5.2 3.6"><path d="M0.8 0.8 L2.6 2.7 L4.4 0.8" fill="none" stroke="#555" stroke-width="1.1" stroke-linecap="round" stroke-linejoin="round"/></svg>
<div class="t" style="top:395.29px;font-size:10.0px;line-height:14px;color:#333;left:425.50px;width:600px;text-align:right;">85</div>
<div class="r" style="left:1067.88px;top:393.89px;width:33.12px;height:14.80px;border:1px solid #d9dbde;border-radius:2px;box-sizing:border-box;background:#fff;"></div>
<div class="t" style="top:395.29px;font-size:10.0px;line-height:14px;color:#333;left:1074.48px;">37</div>
<svg class="r" style="left:1090.00px;top:400.09px" width="5.2" height="3.6" viewBox="0 0 5.2 3.6"><path d="M0.8 0.8 L2.6 2.7 L4.4 0.8" fill="none" stroke="#555" stroke-width="1.1" stroke-linecap="round" stroke-linejoin="round"/></svg>
<div class="t" style="top:395.29px;font-size:10.0px;line-height:14px;color:#2ea052;left:534.30px;width:600px;text-align:right;">+10</div>
<div class="t" style="top:395.29px;font-size:10.0px;line-height:14px;color:#e0383e;left:567.30px;width:600px;text-align:right;">−6</div>
<div class="t" style="top:395.29px;font-size:10.0px;line-height:14px;color:#3467bd;left:621.50px;width:600px;text-align:right;">37</div>
<div class="t" style="top:395.29px;font-size:10.0px;line-height:14px;color:#333;left:676.20px;width:600px;text-align:right;">0</div>
<div class="t" style="top:395.29px;font-size:10.0px;line-height:14px;color:#333;left:733.00px;width:600px;text-align:right;">0</div>
<div class="t" style="top:395.29px;font-size:10.0px;line-height:14px;color:#333;left:1699.50px;">17 Jan 2019</div>
<div class="t" style="top:407.29px;font-size:10.0px;line-height:14px;color:#333;left:1699.50px;">6 h ago</div>
<div class="t" style="top:395.29px;font-size:10.0px;line-height:14px;color:#333;left:1250.00px;width:600px;text-align:right;">1 d ago</div>
<svg class="r" style="left:1882.00px;top:398.49px" width="9" height="9" viewBox="0 0 9 9"><circle cx="3.7" cy="3.7" r="2.8" fill="none" stroke="#666" stroke-width="1.2"/><path d="M5.8 5.8 L8.2 8.2" stroke="#666" stroke-width="1.4" stroke-linecap="round"/></svg>
<div class="r" style="left:146.20px;top:426.22px;width:1751.00px;height:1.00px;background:#eceef0;"></div>
<div class="t" style="top:433.52px;font-size:10.2px;line-height:14px;color:#1b9446;left:146.70px;transform:scaleX(0.9804);transform-origin:left 50%;">https://<b style="letter-spacing:-0.2px">globalexplorers.org</b>/programs/forms/nominate/<svg width="5" height="4" viewBox="0 0 5 4" style="margin-left:3.2px;vertical-align:1px"><path d="M0.2 0.4 H4.8 L2.5 3.5 Z" fill="#1b9446"/></svg></div>
<div class="t" style="top:445.32px;font-size:10.2px;line-height:14px;color:#1b9446;left:146.20px;transform:scaleX(0.9804);transform-origin:left 50%;"><svg width="6" height="6" viewBox="0 0 6 6" style="vertical-align:0px;margin-right:2.2px"><path d="M0.8 0 V3.8 H5" fill="none" stroke="#b7babe" stroke-width="0.9"/><path d="M3.8 2.6 L5.2 3.8 L3.8 5" fill="none" stroke="#b7babe" stroke-width="0.9"/></svg><span style="display:inline-block;background:#fce38c;color:#3a3a3a;border-radius:2px;font-size:8.4px;line-height:9px;padding:0 2.2px;vertical-align:0px;margin-right:2.4px;-webkit-text-stroke:0.1px currentColor">301</span><svg width="6" height="5" viewBox="0 0 6 5" style="vertical-align:1px;margin-right:2.2px"><path d="M0 2.5 H5 M3.5 1 L5 2.5 L3.5 4" fill="none" stroke="#b7babe" stroke-width="0.9"/></svg>https://<b style="letter-spacing:-0.2px">globalexplorers.org</b>/pagenotfound.html<svg width="5" height="4" viewBox="0 0 5 4" style="margin-left:3.2px;vertical-align:1px"><path d="M0.2 0.4 H4.8 L2.5 3.5 Z" fill="#1b9446"/></svg></div>
<div class="t" style="top:432.32px;font-size:10.0px;line-height:14px;color:#333;left:322.90px;width:600px;text-align:right;">0</div>
<div class="r" style="left:957.64px;top:430.92px;width:27.56px;height:14.80px;border:1px solid #d9dbde;border-radius:2px;box-sizing:border-box;background:#fff;"></div>
<div class="t" style="top:432.32px;font-size:10.0px;line-height:14px;color:#333;left:964.24px;">3</div>
<svg class="r" style="left:974.20px;top:437.12px" width="5.2" height="3.6" viewBox="0 0 5.2 3.6"><path d="M0.8 0.8 L2.6 2.7 L4.4 0.8" fill="none" stroke="#555" stroke-width="1.1" stroke-linecap="round" stroke-linejoin="round"/></svg>
<div class="t" style="top:432.32px;font-size:10.0px;line-height:14px;color:#333;left:425.50px;width:600px;text-align:right;">79</div>
<div class="r" style="left:1073.44px;top:430.92px;width:27.56px;height:14.80px;border:1px solid #d9dbde;border-radius:2px;box-sizing:border-box;background:#fff;"></div>
<div class="t" style="top:432.32px;font-size:10.0px;line-height:14px;color:#333;left:1080.04px;">4</div>
<svg class="r" style="left:1090.00px;top:437.12px" width="5.2" height="3.6" viewBox="0 0 5.2 3.6"><path d="M0.8 0.8 L2.6 2.7 L4.4 0.8" fill="none" stroke="#555" stroke-width="1.1" stroke-linecap="round" stroke-linejoin="round"/></svg>
<div class="t" style="top:432.32px;font-size:10.0px;line-height:14px;color:#2ea052;left:534.30px;width:600px;text-align:right;">+1</div>
<div class="t" style="top:432.32px;font-size:10.0px;line-height:14px;color:#3467bd;left:621.50px;width:600px;text-align:right;">4</div>
<div class="t" style="top:432.32px;font-size:10.0px;line-height:14px;color:#333;left:676.20px;width:600px;text-align:right;">0</div>
<div class="t" style="top:432.32px;font-size:10.0px;line-height:14px;color:#333;left:733.00px;width:600px;text-align:right;">0</div>
<div class="t" style="top:432.32px;font-size:10.0px;line-height:14px;color:#333;left:1699.50px;">8 Jun 2024</div>
<div class="t" style="top:444.32px;font-size:10.0px;line-height:14px;color:#333;left:1699.50px;">7 d ago</div>
<div class="t" style="top:432.32px;font-size:10.0px;line-height:14px;color:#333;left:1250.00px;width:600px;text-align:right;">8 d ago</div>
<svg class="r" style="left:1882.00px;top:435.52px" width="9" height="9" viewBox="0 0 9 9"><circle cx="3.7" cy="3.7" r="2.8" fill="none" stroke="#666" stroke-width="1.2"/><path d="M5.8 5.8 L8.2 8.2" stroke="#666" stroke-width="1.4" stroke-linecap="round"/></svg>
<div class="r" style="left:146.20px;top:463.25px;width:1751.00px;height:1.00px;background:#eceef0;"></div>
<div class="t" style="top:470.55px;font-size:10.2px;line-height:14px;color:#1b9446;left:146.70px;transform:scaleX(0.9804);transform-origin:left 50%;">https://<b style="letter-spacing:-0.2px">globalexplorers.org</b>/programs/leading<span style="letter-spacing:-1.1px">_</span>the<span style="letter-spacing:-1.1px">_</span>way<svg width="5" height="4" viewBox="0 0 5 4" style="margin-left:3.2px;vertical-align:1px"><path d="M0.2 0.4 H4.8 L2.5 3.5 Z" fill="#1b9446"/></svg></div>
<div class="t" style="top:482.35px;font-size:10.2px;line-height:14px;color:#1b9446;left:146.20px;transform:scaleX(0.9804);transform-origin:left 50%;"><svg width="6" height="6" viewBox="0 0 6 6" style="vertical-align:0px;margin-right:2.2px"><path d="M0.8 0 V3.8 H5" fill="none" stroke="#b7babe" stroke-width="0.9"/><path d="M3.8 2.6 L5.2 3.8 L3.8 5" fill="none" stroke="#b7babe" stroke-width="0.9"/></svg><span style="display:inline-block;background:#fce38c;color:#3a3a3a;border-radius:2px;font-size:8.4px;line-height:9px;padding:0 2.2px;vertical-align:0px;margin-right:2.4px;-webkit-text-stroke:0.1px currentColor">301</span><svg width="6" height="5" viewBox="0 0 6 5" style="vertical-align:1px;margin-right:2.2px"><path d="M0 2.5 H5 M3.5 1 L5 2.5 L3.5 4" fill="none" stroke="#b7babe" stroke-width="0.9"/></svg>https://<b style="letter-spacing:-0.2px">globalexplorers.org</b>/pagenotfound.html<svg width="5" height="4" viewBox="0 0 5 4" style="margin-left:3.2px;vertical-align:1px"><path d="M0.2 0.4 H4.8 L2.5 3.5 Z" fill="#1b9446"/></svg></div>
<div class="t" style="top:469.35px;font-size:10.0px;line-height:14px;color:#333;left:322.90px;width:600px;text-align:right;">0</div>
<div class="r" style="left:957.64px;top:467.95px;width:27.56px;height:14.80px;border:1px solid #d9dbde;border-radius:2px;box-sizing:border-box;background:#fff;"></div>
<div class="t" style="top:469.35px;font-size:10.0px;line-height:14px;color:#333;left:964.24px;">3</div>
<svg class="r" style="left:974.20px;top:474.15px" width="5.2" height="3.6" viewBox="0 0 5.2 3.6"><path d="M0.8 0.8 L2.6 2.7 L4.4 0.8" fill="none" stroke="#555" stroke-width="1.1" stroke-linecap="round" stroke-linejoin="round"/></svg>
<div class="t" style="top:469.35px;font-size:10.0px;line-height:14px;color:#333;left:425.50px;width:600px;text-align:right;">79</div>
<div class="r" style="left:1073.44px;top:467.95px;width:27.56px;height:14.80px;border:1px solid #d9dbde;border-radius:2px;box-sizing:border-box;background:#fff;"></div>
<div class="t" style="top:469.35px;font-size:10.0px;line-height:14px;color:#333;left:1080.04px;">4</div>
<svg class="r" style="left:1090.00px;top:474.15px" width="5.2" height="3.6" viewBox="0 0 5.2 3.6"><path d="M0.8 0.8 L2.6 2.7 L4.4 0.8" fill="none" stroke="#555" stroke-width="1.1" stroke-linecap="round" stroke-linejoin="round"/></svg>
<div class="t" style="top:469.35px;font-size:10.0px;line-height:14px;color:#2ea052;left:534.30px;width:600px;text-align:right;">+1</div>
<div class="t" style="top:469.35px;font-size:10.0px;line-height:14px;color:#e0383e;left:567.30px;width:600px;text-align:right;">−3</div>
<div class="t" style="top:469.35px;font-size:10.0px;line-height:14px;color:#3467bd;left:621.50px;width:600px;text-align:right;">4</div>
<div class="t" style="top:469.35px;font-size:10.0px;line-height:14px;color:#333;left:676.20px;width:600px;text-align:right;">0</div>
<div class="t" style="top:469.35px;font-size:10.0px;line-height:14px;color:#333;left:733.00px;width:600px;text-align:right;">0</div>
<div class="t" style="top:469.35px;font-size:10.0px;line-height:14px;color:#333;left:1699.50px;">14 Mar 2024</div>
<div class="t" style="top:481.35px;font-size:10.0px;line-height:14px;color:#333;left:1699.50px;">6 Nov 2025</div>
<div class="t" style="top:469.35px;font-size:10.0px;line-height:14px;color:#333;left:1250.00px;width:600px;text-align:right;">8 d ago</div>
<svg class="r" style="left:1882.00px;top:472.55px" width="9" height="9" viewBox="0 0 9 9"><circle cx="3.7" cy="3.7" r="2.8" fill="none" stroke="#666" stroke-width="1.2"/><path d="M5.8 5.8 L8.2 8.2" stroke="#666" stroke-width="1.4" stroke-linecap="round"/></svg>
<div class="r" style="left:146.20px;top:500.28px;width:1751.00px;height:1.00px;background:#eceef0;"></div>
<div class="t" style="top:507.58px;font-size:10.2px;line-height:14px;color:#1b9446;left:146.70px;transform:scaleX(0.9804);transform-origin:left 50%;">http://<b style="letter-spacing:-0.2px">www.globalexplorers.org</b>/programs/forms/nominate/<svg width="5" height="4" viewBox="0 0 5 4" style="margin-left:3.2px;vertical-align:1px"><path d="M0.2 0.4 H4.8 L2.5 3.5 Z" fill="#1b9446"/></svg></div>
<div class="t" style="top:519.38px;font-size:10.2px;line-height:14px;color:#1b9446;left:146.20px;transform:scaleX(0.9804);transform-origin:left 50%;"><svg width="6" height="6" viewBox="0 0 6 6" style="vertical-align:0px;margin-right:2.2px"><path d="M0.8 0 V3.8 H5" fill="none" stroke="#b7babe" stroke-width="0.9"/><path d="M3.8 2.6 L5.2 3.8 L3.8 5" fill="none" stroke="#b7babe" stroke-width="0.9"/></svg><span style="display:inline-block;background:#fce38c;color:#3a3a3a;border-radius:2px;font-size:8.4px;line-height:9px;padding:0 2.2px;vertical-align:0px;margin-right:2.4px;-webkit-text-stroke:0.1px currentColor">301</span><svg width="6" height="5" viewBox="0 0 6 5" style="vertical-align:1px;margin-right:2.2px"><path d="M0 2.5 H5 M3.5 1 L5 2.5 L3.5 4" fill="none" stroke="#b7babe" stroke-width="0.9"/></svg>https://<b style="letter-spacing:-0.2px">www.globalexplorers.org</b>/programs/forms/nominate/<svg width="5" height="4" viewBox="0 0 5 4" style="margin-left:3.2px;vertical-align:1px"><path d="M0.2 0.4 H4.8 L2.5 3.5 Z" fill="#1b9446"/></svg></div>
<div class="t" style="top:506.38px;font-size:10.0px;line-height:14px;color:#333;left:322.90px;width:600px;text-align:right;">0</div>
<div class="r" style="left:957.64px;top:504.98px;width:27.56px;height:14.80px;border:1px solid #d9dbde;border-radius:2px;box-sizing:border-box;background:#fff;"></div>
<div class="t" style="top:506.38px;font-size:10.0px;line-height:14px;color:#333;left:964.24px;">3</div>
<svg class="r" style="left:974.20px;top:511.18px" width="5.2" height="3.6" viewBox="0 0 5.2 3.6"><path d="M0.8 0.8 L2.6 2.7 L4.4 0.8" fill="none" stroke="#555" stroke-width="1.1" stroke-linecap="round" stroke-linejoin="round"/></svg>
<div class="t" style="top:506.38px;font-size:10.0px;line-height:14px;color:#333;left:425.50px;width:600px;text-align:right;">79</div>
<div class="r" style="left:1073.44px;top:504.98px;width:27.56px;height:14.80px;border:1px solid #d9dbde;border-radius:2px;box-sizing:border-box;background:#fff;"></div>
<div class="t" style="top:506.38px;font-size:10.0px;line-height:14px;color:#333;left:1080.04px;">4</div>
<svg class="r" style="left:1090.00px;top:511.18px" width="5.2" height="3.6" viewBox="0 0 5.2 3.6"><path d="M0.8 0.8 L2.6 2.7 L4.4 0.8" fill="none" stroke="#555" stroke-width="1.1" stroke-linecap="round" stroke-linejoin="round"/></svg>
<div class="t" style="top:506.38px;font-size:10.0px;line-height:14px;color:#2ea052;left:534.30px;width:600px;text-align:right;">+1</div>
<div class="t" style="top:506.38px;font-size:10.0px;line-height:14px;color:#3467bd;left:621.50px;width:600px;text-align:right;">4</div>
<div class="t" style="top:506.38px;font-size:10.0px;line-height:14px;color:#333;left:676.20px;width:600px;text-align:right;">0</div>
<div class="t" style="top:506.38px;font-size:10.0px;line-height:14px;color:#333;left:733.00px;width:600px;text-align:right;">0</div>
<div class="t" style="top:506.38px;font-size:10.0px;line-height:14px;color:#333;left:1699.50px;">28 Mar 2021</div>
<div class="t" style="top:518.38px;font-size:10.0px;line-height:14px;color:#333;left:1699.50px;">7 d ago</div>
<div class="t" style="top:506.38px;font-size:10.0px;line-height:14px;color:#333;left:1250.00px;width:600px;text-align:right;">13 Nov 2025</div>
<svg class="r" style="left:1882.00px;top:509.58px" width="9" height="9" viewBox="0 0 9 9"><circle cx="3.7" cy="3.7" r="2.8" fill="none" stroke="#666" stroke-width="1.2"/><path d="M5.8 5.8 L8.2 8.2" stroke="#666" stroke-width="1.4" stroke-linecap="round"/></svg>
<div class="r" style="left:146.20px;top:537.31px;width:1751.00px;height:1.00px;background:#eceef0;"></div>
<div class="t" style="top:544.61px;font-size:10.2px;line-height:14px;color:#1b9446;left:146.70px;transform:scaleX(0.9804);transform-origin:left 50%;">https://<b style="letter-spacing:-0.2px">www.globalexplorers.org</b>/programs/forms/nominate/<svg width="5" height="4" viewBox="0 0 5 4" style="margin-left:3.2px;vertical-align:1px"><path d="M0.2 0.4 H4.8 L2.5 3.5 Z" fill="#1b9446"/></svg></div>
<div class="t" style="top:556.41px;font-size:10.2px;line-height:14px;color:#1b9446;left:146.20px;transform:scaleX(0.9804);transform-origin:left 50%;"><svg width="6" height="6" viewBox="0 0 6 6" style="vertical-align:0px;margin-right:2.2px"><path d="M0.8 0 V3.8 H5" fill="none" stroke="#b7babe" stroke-width="0.9"/><path d="M3.8 2.6 L5.2 3.8 L3.8 5" fill="none" stroke="#b7babe" stroke-width="0.9"/></svg><span style="display:inline-block;background:#fce38c;color:#3a3a3a;border-radius:2px;font-size:8.4px;line-height:9px;padding:0 2.2px;vertical-align:0px;margin-right:2.4px;-webkit-text-stroke:0.1px currentColor">301</span><svg width="6" height="5" viewBox="0 0 6 5" style="vertical-align:1px;margin-right:2.2px"><path d="M0 2.5 H5 M3.5 1 L5 2.5 L3.5 4" fill="none" stroke="#b7babe" stroke-width="0.9"/></svg>https://<b style="letter-spacing:-0.2px">globalexplorers.org</b>/programs/forms/nominate/<svg width="5" height="4" viewBox="0 0 5 4" style="margin-left:3.2px;vertical-align:1px"><path d="M0.2 0.4 H4.8 L2.5 3.5 Z" fill="#1b9446"/></svg></div>
<div class="t" style="top:543.41px;font-size:10.0px;line-height:14px;color:#333;left:322.90px;width:600px;text-align:right;">0</div>
<div class="r" style="left:957.64px;top:542.01px;width:27.56px;height:14.80px;border:1px solid #d9dbde;border-radius:2px;box-sizing:border-box;background:#fff;"></div>
<div class="t" style="top:543.41px;font-size:10.0px;line-height:14px;color:#333;left:964.24px;">3</div>
<svg class="r" style="left:974.20px;top:548.21px" width="5.2" height="3.6" viewBox="0 0 5.2 3.6"><path d="M0.8 0.8 L2.6 2.7 L4.4 0.8" fill="none" stroke="#555" stroke-width="1.1" stroke-linecap="round" stroke-linejoin="round"/></svg>
<div class="t" style="top:543.41px;font-size:10.0px;line-height:14px;color:#333;left:425.50px;width:600px;text-align:right;">79</div>
<div class="r" style="left:1073.44px;top:542.01px;width:27.56px;height:14.80px;border:1px solid #d9dbde;border-radius:2px;box-sizing:border-box;background:#fff;"></div>
<div class="t" style="top:543.41px;font-size:10.0px;line-height:14px;color:#333;left:1080.04px;">4</div>
<svg class="r" style="left:1090.00px;top:548.21px" width="5.2" height="3.6" viewBox="0 0 5.2 3.6"><path d="M0.8 0.8 L2.6 2.7 L4.4 0.8" fill="none" stroke="#555" stroke-width="1.1" stroke-linecap="round" stroke-linejoin="round"/></svg>
<div class="t" style="top:543.41px;font-size:10.0px;line-height:14px;color:#2ea052;left:534.30px;width:600px;text-align:right;">+1</div>
<div class="t" style="top:543.41px;font-size:10.0px;line-height:14px;color:#3467bd;left:621.50px;width:600px;text-align:right;">4</div>
<div class="t" style="top:543.41px;font-size:10.0px;line-height:14px;color:#333;left:676.20px;width:600px;text-align:right;">0</div>
<div class="t" style="top:543.41px;font-size:10.0px;line-height:14px;color:#333;left:733.00px;width:600px;text-align:right;">0</div>
<div class="t" style="top:543.41px;font-size:10.0px;line-height:14px;color:#333;left:1699.50px;">26 May 2024</div>
<div class="t" style="top:555.41px;font-size:10.0px;line-height:14px;color:#333;left:1699.50px;">7 d ago</div>
<div class="t" style="top:543.41px;font-size:10.0px;line-height:14px;color:#333;left:1250.00px;width:600px;text-align:right;">7 d ago</div>
<svg class="r" style="left:1882.00px;top:546.61px" width="9" height="9" viewBox="0 0 9 9"><circle cx="3.7" cy="3.7" r="2.8" fill="none" stroke="#666" stroke-width="1.2"/><path d="M5.8 5.8 L8.2 8.2" stroke="#666" stroke-width="1.4" stroke-linecap="round"/></svg>
<div class="r" style="left:146.20px;top:574.34px;width:1751.00px;height:1.00px;background:#eceef0;"></div>
<div class="t" style="top:581.64px;font-size:10.2px;line-height:14px;color:#1b9446;left:146.70px;transform:scaleX(0.9804);transform-origin:left 50%;">http://<b style="letter-spacing:-0.2px">www.globalexplorers.org</b>/programs/leading<span style="letter-spacing:-1.1px">_</span>the<span style="letter-spacing:-1.1px">_</span>way<svg width="5" height="4" viewBox="0 0 5 4" style="margin-left:3.2px;vertical-align:1px"><path d="M0.2 0.4 H4.8 L2.5 3.5 Z" fill="#1b9446"/></svg></div>
<div class="t" style="top:593.44px;font-size:10.2px;line-height:14px;color:#1b9446;left:146.20px;transform:scaleX(0.9804);transform-origin:left 50%;"><svg width="6" height="6" viewBox="0 0 6 6" style="vertical-align:0px;margin-right:2.2px"><path d="M0.8 0 V3.8 H5" fill="none" stroke="#b7babe" stroke-width="0.9"/><path d="M3.8 2.6 L5.2 3.8 L3.8 5" fill="none" stroke="#b7babe" stroke-width="0.9"/></svg><span style="display:inline-block;background:#fce38c;color:#3a3a3a;border-radius:2px;font-size:8.4px;line-height:9px;padding:0 2.2px;vertical-align:0px;margin-right:2.4px;-webkit-text-stroke:0.1px currentColor">301</span><svg width="6" height="5" viewBox="0 0 6 5" style="vertical-align:1px;margin-right:2.2px"><path d="M0 2.5 H5 M3.5 1 L5 2.5 L3.5 4" fill="none" stroke="#b7babe" stroke-width="0.9"/></svg>https://<b style="letter-spacing:-0.2px">www.globalexplorers.org</b>/programs/leading<span style="letter-spacing:-1.1px">_</span>the<span style="letter-spacing:-1.1px">_</span>way<svg width="5" height="4" viewBox="0 0 5 4" style="margin-left:3.2px;vertical-align:1px"><path d="M0.2 0.4 H4.8 L2.5 3.5 Z" fill="#1b9446"/></svg></div>
<div class="t" style="top:580.44px;font-size:10.0px;line-height:14px;color:#333;left:322.90px;width:600px;text-align:right;">0</div>
<div class="r" style="left:957.64px;top:579.04px;width:27.56px;height:14.80px;border:1px solid #d9dbde;border-radius:2px;box-sizing:border-box;background:#fff;"></div>
<div class="t" style="top:580.44px;font-size:10.0px;line-height:14px;color:#333;left:964.24px;">3</div>
<svg class="r" style="left:974.20px;top:585.24px" width="5.2" height="3.6" viewBox="0 0 5.2 3.6"><path d="M0.8 0.8 L2.6 2.7 L4.4 0.8" fill="none" stroke="#555" stroke-width="1.1" stroke-linecap="round" stroke-linejoin="round"/></svg>
<div class="t" style="top:580.44px;font-size:10.0px;line-height:14px;color:#333;left:425.50px;width:600px;text-align:right;">79</div>
<div class="r" style="left:1073.44px;top:579.04px;width:27.56px;height:14.80px;border:1px solid #d9dbde;border-radius:2px;box-sizing:border-box;background:#fff;"></div>
<div class="t" style="top:580.44px;font-size:10.0px;line-height:14px;color:#333;left:1080.04px;">4</div>
<svg class="r" style="left:1090.00px;top:585.24px" width="5.2" height="3.6" viewBox="0 0 5.2 3.6"><path d="M0.8 0.8 L2.6 2.7 L4.4 0.8" fill="none" stroke="#555" stroke-width="1.1" stroke-linecap="round" stroke-linejoin="round"/></svg>
<div class="t" style="top:580.44px;font-size:10.0px;line-height:14px;color:#2ea052;left:534.30px;width:600px;text-align:right;">+1</div>
<div class="t" style="top:580.44px;font-size:10.0px;line-height:14px;color:#3467bd;left:621.50px;width:600px;text-align:right;">4</div>
<div class="t" style="top:580.44px;font-size:10.0px;line-height:14px;color:#333;left:676.20px;width:600px;text-align:right;">0</div>
<div class="t" style="top:580.44px;font-size:10.0px;line-height:14px;color:#333;left:733.00px;width:600px;text-align:right;">0</div>
<div class="t" style="top:580.44px;font-size:10.0px;line-height:14px;color:#333;left:1699.50px;">28 Mar 2021</div>
<div class="t" style="top:592.44px;font-size:10.0px;line-height:14px;color:#333;left:1699.50px;">7 d ago</div>
<div class="t" style="top:580.44px;font-size:10.0px;line-height:14px;color:#333;left:1250.00px;width:600px;text-align:right;">13 Nov 2025</div>
<svg class="r" style="left:1882.00px;top:583.64px" width="9" height="9" viewBox="0 0 9 9"><circle cx="3.7" cy="3.7" r="2.8" fill="none" stroke="#666" stroke-width="1.2"/><path d="M5.8 5.8 L8.2 8.2" stroke="#666" stroke-width="1.4" stroke-linecap="round"/></svg>
<div class="r" style="left:146.20px;top:611.37px;width:1751.00px;height:1.00px;background:#eceef0;"></div>
<div class="t" style="top:618.67px;font-size:10.2px;line-height:14px;color:#1b9446;left:146.70px;transform:scaleX(0.9804);transform-origin:left 50%;">https://<b style="letter-spacing:-0.2px">www.globalexplorers.org</b>/programs/leading<span style="letter-spacing:-1.1px">_</span>the<span style="letter-spacing:-1.1px">_</span>way<svg width="5" height="4" viewBox="0 0 5 4" style="margin-left:3.2px;vertical-align:1px"><path d="M0.2 0.4 H4.8 L2.5 3.5 Z" fill="#1b9446"/></svg></div>
<div class="t" style="top:630.47px;font-size:10.2px;line-height:14px;color:#1b9446;left:146.20px;transform:scaleX(0.9804);transform-origin:left 50%;"><svg width="6" height="6" viewBox="0 0 6 6" style="vertical-align:0px;margin-right:2.2px"><path d="M0.8 0 V3.8 H5" fill="none" stroke="#b7babe" stroke-width="0.9"/><path d="M3.8 2.6 L5.2 3.8 L3.8 5" fill="none" stroke="#b7babe" stroke-width="0.9"/></svg><span style="display:inline-block;background:#fce38c;color:#3a3a3a;border-radius:2px;font-size:8.4px;line-height:9px;padding:0 2.2px;vertical-align:0px;margin-right:2.4px;-webkit-text-stroke:0.1px currentColor">301</span><svg width="6" height="5" viewBox="0 0 6 5" style="vertical-align:1px;margin-right:2.2px"><path d="M0 2.5 H5 M3.5 1 L5 2.5 L3.5 4" fill="none" stroke="#b7babe" stroke-width="0.9"/></svg>https://<b style="letter-spacing:-0.2px">globalexplorers.org</b>/programs/leading<span style="letter-spacing:-1.1px">_</span>the<span style="letter-spacing:-1.1px">_</span>way<svg width="5" height="4" viewBox="0 0 5 4" style="margin-left:3.2px;vertical-align:1px"><path d="M0.2 0.4 H4.8 L2.5 3.5 Z" fill="#1b9446"/></svg></div>
<div class="t" style="top:617.47px;font-size:10.0px;line-height:14px;color:#333;left:322.90px;width:600px;text-align:right;">0</div>
<div class="r" style="left:957.64px;top:616.07px;width:27.56px;height:14.80px;border:1px solid #d9dbde;border-radius:2px;box-sizing:border-box;background:#fff;"></div>
<div class="t" style="top:617.47px;font-size:10.0px;line-height:14px;color:#333;left:964.24px;">3</div>
<svg class="r" style="left:974.20px;top:622.27px" width="5.2" height="3.6" viewBox="0 0 5.2 3.6"><path d="M0.8 0.8 L2.6 2.7 L4.4 0.8" fill="none" stroke="#555" stroke-width="1.1" stroke-linecap="round" stroke-linejoin="round"/></svg>
<div class="t" style="top:617.47px;font-size:10.0px;line-height:14px;color:#333;left:425.50px;width:600px;text-align:right;">79</div>
<div class="r" style="left:1073.44px;top:616.07px;width:27.56px;height:14.80px;border:1px solid #d9dbde;border-radius:2px;box-sizing:border-box;background:#fff;"></div>
<div class="t" style="top:617.47px;font-size:10.0px;line-height:14px;color:#333;left:1080.04px;">4</div>
<svg class="r" style="left:1090.00px;top:622.27px" width="5.2" height="3.6" viewBox="0 0 5.2 3.6"><path d="M0.8 0.8 L2.6 2.7 L4.4 0.8" fill="none" stroke="#555" stroke-width="1.1" stroke-linecap="round" stroke-linejoin="round"/></svg>
<div class="t" style="top:617.47px;font-size:10.0px;line-height:14px;color:#2ea052;left:534.30px;width:600px;text-align:right;">+1</div>
<div class="t" style="top:617.47px;font-size:10.0px;line-height:14px;color:#3467bd;left:621.50px;width:600px;text-align:right;">4</div>
<div class="t" style="top:617.47px;font-size:10.0px;line-height:14px;color:#333;left:676.20px;width:600px;text-align:right;">0</div>
<div class="t" style="top:617.47px;font-size:10.0px;line-height:14px;color:#333;left:733.00px;width:600px;text-align:right;">0</div>
<div class="t" style="top:617.47px;font-size:10.0px;line-height:14px;color:#333;left:1699.50px;">4 Mar 2024</div>
<div class="t" style="top:629.47px;font-size:10.0px;line-height:14px;color:#333;left:1699.50px;">7 d ago</div>
<div class="t" style="top:617.47px;font-size:10.0px;line-height:14px;color:#333;left:1250.00px;width:600px;text-align:right;">7 d ago</div>
<svg class="r" style="left:1882.00px;top:620.67px" width="9" height="9" viewBox="0 0 9 9"><circle cx="3.7" cy="3.7" r="2.8" fill="none" stroke="#666" stroke-width="1.2"/><path d="M5.8 5.8 L8.2 8.2" stroke="#666" stroke-width="1.4" stroke-linecap="round"/></svg>
<div class="r" style="left:146.20px;top:648.40px;width:1751.00px;height:1.00px;background:#eceef0;"></div>
<div class="t" style="top:655.70px;font-size:10.2px;line-height:14px;color:#1b9446;left:146.70px;transform:scaleX(0.9804);transform-origin:left 50%;">http://<b style="letter-spacing:-0.2px">globalexplorers.org</b>/<svg width="5" height="4" viewBox="0 0 5 4" style="margin-left:3.2px;vertical-align:1px"><path d="M0.2 0.4 H4.8 L2.5 3.5 Z" fill="#1b9446"/></svg></div>
<div class="t" style="top:667.50px;font-size:10.2px;line-height:14px;color:#1b9446;left:146.20px;transform:scaleX(0.9804);transform-origin:left 50%;"><svg width="6" height="6" viewBox="0 0 6 6" style="vertical-align:0px;margin-right:2.2px"><path d="M0.8 0 V3.8 H5" fill="none" stroke="#b7babe" stroke-width="0.9"/><path d="M3.8 2.6 L5.2 3.8 L3.8 5" fill="none" stroke="#b7babe" stroke-width="0.9"/></svg><span style="display:inline-block;background:#fce38c;color:#3a3a3a;border-radius:2px;font-size:8.4px;line-height:9px;padding:0 2.2px;vertical-align:0px;margin-right:2.4px;-webkit-text-stroke:0.1px currentColor">301</span><svg width="6" height="5" viewBox="0 0 6 5" style="vertical-align:1px;margin-right:2.2px"><path d="M0 2.5 H5 M3.5 1 L5 2.5 L3.5 4" fill="none" stroke="#b7babe" stroke-width="0.9"/></svg>https://<b style="letter-spacing:-0.2px">globalexplorers.org</b>/<svg width="5" height="4" viewBox="0 0 5 4" style="margin-left:3.2px;vertical-align:1px"><path d="M0.2 0.4 H4.8 L2.5 3.5 Z" fill="#1b9446"/></svg></div>
<div class="t" style="top:654.50px;font-size:10.0px;line-height:14px;color:#333;left:322.90px;width:600px;text-align:right;">4.8</div>
<div class="r" style="left:957.64px;top:653.10px;width:27.56px;height:14.80px;border:1px solid #d9dbde;border-radius:2px;box-sizing:border-box;background:#fff;"></div>
<div class="t" style="top:654.50px;font-size:10.0px;line-height:14px;color:#333;left:964.24px;">2</div>
<svg class="r" style="left:974.20px;top:659.30px" width="5.2" height="3.6" viewBox="0 0 5.2 3.6"><path d="M0.8 0.8 L2.6 2.7 L4.4 0.8" fill="none" stroke="#555" stroke-width="1.1" stroke-linecap="round" stroke-linejoin="round"/></svg>
<div class="t" style="top:654.50px;font-size:10.0px;line-height:14px;color:#333;left:425.50px;width:600px;text-align:right;">87</div>
<div class="r" style="left:1073.44px;top:653.10px;width:27.56px;height:14.80px;border:1px solid #d9dbde;border-radius:2px;box-sizing:border-box;background:#fff;"></div>
<div class="t" style="top:654.50px;font-size:10.0px;line-height:14px;color:#333;left:1080.04px;">2</div>
<svg class="r" style="left:1090.00px;top:659.30px" width="5.2" height="3.6" viewBox="0 0 5.2 3.6"><path d="M0.8 0.8 L2.6 2.7 L4.4 0.8" fill="none" stroke="#555" stroke-width="1.1" stroke-linecap="round" stroke-linejoin="round"/></svg>
<div class="t" style="top:654.50px;font-size:10.0px;line-height:14px;color:#2ea052;left:534.30px;width:600px;text-align:right;">+1</div>
<div class="t" style="top:654.50px;font-size:10.0px;line-height:14px;color:#3467bd;left:621.50px;width:600px;text-align:right;">2</div>
<div class="t" style="top:654.50px;font-size:10.0px;line-height:14px;color:#333;left:676.20px;width:600px;text-align:right;">0</div>
<div class="t" style="top:654.50px;font-size:10.0px;line-height:14px;color:#333;left:733.00px;width:600px;text-align:right;">0</div>
<div class="t" style="top:654.50px;font-size:10.0px;line-height:14px;color:#333;left:1699.50px;">7 Apr 2024</div>
<div class="t" style="top:666.50px;font-size:10.0px;line-height:14px;color:#333;left:1699.50px;">27 Sep 2025</div>
<div class="t" style="top:654.50px;font-size:10.0px;line-height:14px;color:#333;left:1250.00px;width:600px;text-align:right;">4 d ago</div>
<svg class="r" style="left:1882.00px;top:657.70px" width="9" height="9" viewBox="0 0 9 9"><circle cx="3.7" cy="3.7" r="2.8" fill="none" stroke="#666" stroke-width="1.2"/><path d="M5.8 5.8 L8.2 8.2" stroke="#666" stroke-width="1.4" stroke-linecap="round"/></svg>
<div class="r" style="left:146.20px;top:685.43px;width:1751.00px;height:1.00px;background:#eceef0;"></div>
<div class="t" style="top:692.73px;font-size:10.2px;line-height:14px;color:#1b9446;left:146.70px;transform:scaleX(0.9804);transform-origin:left 50%;">https://<b style="letter-spacing:-0.2px">globalexplorers.org</b>/programs/leading<span style="letter-spacing:-1.1px">_</span>the<span style="letter-spacing:-1.1px">_</span>way/<svg width="5" height="4" viewBox="0 0 5 4" style="margin-left:3.2px;vertical-align:1px"><path d="M0.2 0.4 H4.8 L2.5 3.5 Z" fill="#1b9446"/></svg></div>
<div class="t" style="top:704.53px;font-size:10.2px;line-height:14px;color:#1b9446;left:146.20px;transform:scaleX(0.9804);transform-origin:left 50%;"><svg width="6" height="6" viewBox="0 0 6 6" style="vertical-align:0px;margin-right:2.2px"><path d="M0.8 0 V3.8 H5" fill="none" stroke="#b7babe" stroke-width="0.9"/><path d="M3.8 2.6 L5.2 3.8 L3.8 5" fill="none" stroke="#b7babe" stroke-width="0.9"/></svg><span style="display:inline-block;background:#fce38c;color:#3a3a3a;border-radius:2px;font-size:8.4px;line-height:9px;padding:0 2.2px;vertical-align:0px;margin-right:2.4px;-webkit-text-stroke:0.1px currentColor">301</span><svg width="6" height="5" viewBox="0 0 6 5" style="vertical-align:1px;margin-right:2.2px"><path d="M0 2.5 H5 M3.5 1 L5 2.5 L3.5 4" fill="none" stroke="#b7babe" stroke-width="0.9"/></svg>https://<b style="letter-spacing:-0.2px">globalexplorers.org</b>/pagenotfound.html<svg width="5" height="4" viewBox="0 0 5 4" style="margin-left:3.2px;vertical-align:1px"><path d="M0.2 0.4 H4.8 L2.5 3.5 Z" fill="#1b9446"/></svg></div>
<div class="r" style="left:861.90px;top:691.93px;width:24.30px;height:12.00px;background:#e0383e;border-radius:6px;"></div>
<div class="t" style="top:692.23px;font-size:8.2px;line-height:14px;color:#fff;letter-spacing:-0.2px;left:573.90px;width:600px;text-align:center;">Lost</div>
<div class="t" style="top:691.53px;font-size:10.0px;line-height:14px;color:#333;left:322.90px;width:600px;text-align:right;">0</div>
<div class="r" style="left:957.64px;top:690.13px;width:27.56px;height:14.80px;border:1px solid #d9dbde;border-radius:2px;box-sizing:border-box;background:#fff;"></div>
<div class="t" style="top:691.53px;font-size:10.0px;line-height:14px;color:#333;left:964.24px;">2</div>
<svg class="r" style="left:974.20px;top:696.33px" width="5.2" height="3.6" viewBox="0 0 5.2 3.6"><path d="M0.8 0.8 L2.6 2.7 L4.4 0.8" fill="none" stroke="#555" stroke-width="1.1" stroke-linecap="round" stroke-linejoin="round"/></svg>
<div class="t" style="top:691.53px;font-size:10.0px;line-height:14px;color:#333;left:425.50px;width:600px;text-align:right;">60</div>
<div class="r" style="left:1073.44px;top:690.13px;width:27.56px;height:14.80px;border:1px solid #d9dbde;border-radius:2px;box-sizing:border-box;background:#fff;"></div>
<div class="t" style="top:691.53px;font-size:10.0px;line-height:14px;color:#333;left:1080.04px;">2</div>
<svg class="r" style="left:1090.00px;top:696.33px" width="5.2" height="3.6" viewBox="0 0 5.2 3.6"><path d="M0.8 0.8 L2.6 2.7 L4.4 0.8" fill="none" stroke="#555" stroke-width="1.1" stroke-linecap="round" stroke-linejoin="round"/></svg>
<div class="t" style="top:691.53px;font-size:10.0px;line-height:14px;color:#e0383e;left:567.30px;width:600px;text-align:right;">−2</div>
<div class="t" style="top:691.53px;font-size:10.0px;line-height:14px;color:#3467bd;left:621.50px;width:600px;text-align:right;">2</div>
<div class="t" style="top:691.53px;font-size:10.0px;line-height:14px;color:#333;left:676.20px;width:600px;text-align:right;">0</div>
<div class="t" style="top:691.53px;font-size:10.0px;line-height:14px;color:#333;left:733.00px;width:600px;text-align:right;">0</div>
<div class="t" style="top:691.53px;font-size:10.0px;line-height:14px;color:#333;left:1699.50px;">6 Sep 2024</div>
<div class="t" style="top:703.53px;font-size:10.0px;line-height:14px;color:#333;left:1699.50px;">1 Nov 2025</div>
<div class="t" style="top:691.53px;font-size:10.0px;line-height:14px;color:#333;left:1250.00px;width:600px;text-align:right;">13 Nov 2025</div>
<svg class="r" style="left:1882.00px;top:694.73px" width="9" height="9" viewBox="0 0 9 9"><circle cx="3.7" cy="3.7" r="2.8" fill="none" stroke="#666" stroke-width="1.2"/><path d="M5.8 5.8 L8.2 8.2" stroke="#666" stroke-width="1.4" stroke-linecap="round"/></svg>
<div class="r" style="left:146.20px;top:722.46px;width:1751.00px;height:1.00px;background:#eceef0;"></div>
<div class="t" style="top:729.76px;font-size:10.2px;line-height:14px;color:#1b9446;left:146.70px;transform:scaleX(0.9804);transform-origin:left 50%;">https://<b style="letter-spacing:-0.2px">globalexplorers.org</b>/programs/leading<span style="letter-spacing:-1.1px">_</span>the<span style="letter-spacing:-1.1px">_</span>way/grandcanyon/<svg width="5" height="4" viewBox="0 0 5 4" style="margin-left:3.2px;vertical-align:1px"><path d="M0.2 0.4 H4.8 L2.5 3.5 Z" fill="#1b9446"/></svg></div>
<div class="t" style="top:741.56px;font-size:10.2px;line-height:14px;color:#1b9446;left:146.20px;transform:scaleX(0.9804);transform-origin:left 50%;"><svg width="6" height="6" viewBox="0 0 6 6" style="vertical-align:0px;margin-right:2.2px"><path d="M0.8 0 V3.8 H5" fill="none" stroke="#b7babe" stroke-width="0.9"/><path d="M3.8 2.6 L5.2 3.8 L3.8 5" fill="none" stroke="#b7babe" stroke-width="0.9"/></svg><span style="display:inline-block;background:#fce38c;color:#3a3a3a;border-radius:2px;font-size:8.4px;line-height:9px;padding:0 2.2px;vertical-align:0px;margin-right:2.4px;-webkit-text-stroke:0.1px currentColor">301</span><svg width="6" height="5" viewBox="0 0 6 5" style="vertical-align:1px;margin-right:2.2px"><path d="M0 2.5 H5 M3.5 1 L5 2.5 L3.5 4" fill="none" stroke="#b7babe" stroke-width="0.9"/></svg>https://<b style="letter-spacing:-0.2px">globalexplorers.org</b>/pagenotfound.html<svg width="5" height="4" viewBox="0 0 5 4" style="margin-left:3.2px;vertical-align:1px"><path d="M0.2 0.4 H4.8 L2.5 3.5 Z" fill="#1b9446"/></svg></div>
<div class="r" style="left:861.90px;top:728.96px;width:24.30px;height:12.00px;background:#27a055;border-radius:6px;"></div>
<div class="t" style="top:729.26px;font-size:8.2px;line-height:14px;color:#fff;letter-spacing:-0.2px;left:573.90px;width:600px;text-align:center;">New</div>
<div class="t" style="top:728.56px;font-size:10.0px;line-height:14px;color:#333;left:322.90px;width:600px;text-align:right;">0</div>
<div class="r" style="left:957.64px;top:727.16px;width:27.56px;height:14.80px;border:1px solid #d9dbde;border-radius:2px;box-sizing:border-box;background:#fff;"></div>
<div class="t" style="top:728.56px;font-size:10.0px;line-height:14px;color:#333;left:964.24px;">2</div>
<svg class="r" style="left:974.20px;top:733.36px" width="5.2" height="3.6" viewBox="0 0 5.2 3.6"><path d="M0.8 0.8 L2.6 2.7 L4.4 0.8" fill="none" stroke="#555" stroke-width="1.1" stroke-linecap="round" stroke-linejoin="round"/></svg>
<div class="t" style="top:728.56px;font-size:10.0px;line-height:14px;color:#333;left:425.50px;width:600px;text-align:right;">79</div>
<div class="r" style="left:1073.44px;top:727.16px;width:27.56px;height:14.80px;border:1px solid #d9dbde;border-radius:2px;box-sizing:border-box;background:#fff;"></div>
<div class="t" style="top:728.56px;font-size:10.0px;line-height:14px;color:#333;left:1080.04px;">3</div>
<svg class="r" style="left:1090.00px;top:733.36px" width="5.2" height="3.6" viewBox="0 0 5.2 3.6"><path d="M0.8 0.8 L2.6 2.7 L4.4 0.8" fill="none" stroke="#555" stroke-width="1.1" stroke-linecap="round" stroke-linejoin="round"/></svg>
<div class="t" style="top:728.56px;font-size:10.0px;line-height:14px;color:#2ea052;left:534.30px;width:600px;text-align:right;">+3</div>
<div class="t" style="top:728.56px;font-size:10.0px;line-height:14px;color:#e0383e;left:567.30px;width:600px;text-align:right;">−2</div>
<div class="t" style="top:728.56px;font-size:10.0px;line-height:14px;color:#3467bd;left:621.50px;width:600px;text-align:right;">3</div>
<div class="t" style="top:728.56px;font-size:10.0px;line-height:14px;color:#333;left:676.20px;width:600px;text-align:right;">0</div>
<div class="t" style="top:728.56px;font-size:10.0px;line-height:14px;color:#333;left:733.00px;width:600px;text-align:right;">0</div>
<div class="t" style="top:728.56px;font-size:10.0px;line-height:14px;color:#333;left:1699.50px;">6 Apr 2025</div>
<div class="t" style="top:740.56px;font-size:10.0px;line-height:14px;color:#333;left:1699.50px;">26 Oct 2025</div>
<div class="t" style="top:728.56px;font-size:10.0px;line-height:14px;color:#333;left:1250.00px;width:600px;text-align:right;">3 h ago</div>
<svg class="r" style="left:1882.00px;top:731.76px" width="9" height="9" viewBox="0 0 9 9"><circle cx="3.7" cy="3.7" r="2.8" fill="none" stroke="#666" stroke-width="1.2"/><path d="M5.8 5.8 L8.2 8.2" stroke="#666" stroke-width="1.4" stroke-linecap="round"/></svg>
<div class="r" style="left:146.20px;top:759.49px;width:1751.00px;height:1.00px;background:#eceef0;"></div>
<div class="t" style="top:766.79px;font-size:10.2px;line-height:14px;color:#1b9446;left:146.70px;transform:scaleX(0.9804);transform-origin:left 50%;">https://<b style="letter-spacing:-0.2px">globalexplorers.org</b>/programs/learning<span style="letter-spacing:-1.1px">_</span>afar/<svg width="5" height="4" viewBox="0 0 5 4" style="margin-left:3.2px;vertical-align:1px"><path d="M0.2 0.4 H4.8 L2.5 3.5 Z" fill="#1b9446"/></svg></div>
<div class="t" style="top:778.59px;font-size:10.2px;line-height:14px;color:#1b9446;left:146.20px;transform:scaleX(0.9804);transform-origin:left 50%;"><svg width="6" height="6" viewBox="0 0 6 6" style="vertical-align:0px;margin-right:2.2px"><path d="M0.8 0 V3.8 H5" fill="none" stroke="#b7babe" stroke-width="0.9"/><path d="M3.8 2.6 L5.2 3.8 L3.8 5" fill="none" stroke="#b7babe" stroke-width="0.9"/></svg><span style="display:inline-block;background:#fce38c;color:#3a3a3a;border-radius:2px;font-size:8.4px;line-height:9px;padding:0 2.2px;vertical-align:0px;margin-right:2.4px;-webkit-text-stroke:0.1px currentColor">301</span><svg width="6" height="5" viewBox="0 0 6 5" style="vertical-align:1px;margin-right:2.2px"><path d="M0 2.5 H5 M3.5 1 L5 2.5 L3.5 4" fill="none" stroke="#b7babe" stroke-width="0.9"/></svg>https://<b style="letter-spacing:-0.2px">globalexplorers.org</b>/pagenotfound.html<svg width="5" height="4" viewBox="0 0 5 4" style="margin-left:3.2px;vertical-align:1px"><path d="M0.2 0.4 H4.8 L2.5 3.5 Z" fill="#1b9446"/></svg></div>
<div class="t" style="top:765.59px;font-size:10.0px;line-height:14px;color:#333;left:322.90px;width:600px;text-align:right;">0</div>
<div class="r" style="left:957.64px;top:764.19px;width:27.56px;height:14.80px;border:1px solid #d9dbde;border-radius:2px;box-sizing:border-box;background:#fff;"></div>
<div class="t" style="top:765.59px;font-size:10.0px;line-height:14px;color:#333;left:964.24px;">2</div>
<svg class="r" style="left:974.20px;top:770.39px" width="5.2" height="3.6" viewBox="0 0 5.2 3.6"><path d="M0.8 0.8 L2.6 2.7 L4.4 0.8" fill="none" stroke="#555" stroke-width="1.1" stroke-linecap="round" stroke-linejoin="round"/></svg>
<div class="t" style="top:765.59px;font-size:10.0px;line-height:14px;color:#333;left:425.50px;width:600px;text-align:right;">64</div>
<div class="r" style="left:1073.44px;top:764.19px;width:27.56px;height:14.80px;border:1px solid #d9dbde;border-radius:2px;box-sizing:border-box;background:#fff;"></div>
<div class="t" style="top:765.59px;font-size:10.0px;line-height:14px;color:#333;left:1080.04px;">2</div>
<svg class="r" style="left:1090.00px;top:770.39px" width="5.2" height="3.6" viewBox="0 0 5.2 3.6"><path d="M0.8 0.8 L2.6 2.7 L4.4 0.8" fill="none" stroke="#555" stroke-width="1.1" stroke-linecap="round" stroke-linejoin="round"/></svg>
<div class="t" style="top:765.59px;font-size:10.0px;line-height:14px;color:#3467bd;left:621.50px;width:600px;text-align:right;">2</div>
<div class="t" style="top:765.59px;font-size:10.0px;line-height:14px;color:#333;left:676.20px;width:600px;text-align:right;">0</div>
<div class="t" style="top:765.59px;font-size:10.0px;line-height:14px;color:#333;left:733.00px;width:600px;text-align:right;">0</div>
<div class="t" style="top:765.59px;font-size:10.0px;line-height:14px;color:#333;left:1699.50px;">23 Jan 2024</div>
<div class="t" style="top:777.59px;font-size:10.0px;line-height:14px;color:#333;left:1699.50px;">6 h ago</div>
<div class="t" style="top:765.59px;font-size:10.0px;line-height:14px;color:#333;left:1250.00px;width:600px;text-align:right;">7 d ago</div>
<svg class="r" style="left:1882.00px;top:768.79px" width="9" height="9" viewBox="0 0 9 9"><circle cx="3.7" cy="3.7" r="2.8" fill="none" stroke="#666" stroke-width="1.2"/><path d="M5.8 5.8 L8.2 8.2" stroke="#666" stroke-width="1.4" stroke-linecap="round"/></svg>
<div class="r" style="left:146.20px;top:796.52px;width:1751.00px;height:1.00px;background:#eceef0;"></div>
<div class="t" style="top:803.82px;font-size:10.2px;line-height:14px;color:#1b9446;left:146.70px;transform:scaleX(0.9804);transform-origin:left 50%;">http://<b style="letter-spacing:-0.2px">www.globalexplorers.org</b>/programs/leading<span style="letter-spacing:-1.1px">_</span>the<span style="letter-spacing:-1.1px">_</span>way/<svg width="5" height="4" viewBox="0 0 5 4" style="margin-left:3.2px;vertical-align:1px"><path d="M0.2 0.4 H4.8 L2.5 3.5 Z" fill="#1b9446"/></svg></div>
<div class="t" style="top:815.62px;font-size:10.2px;line-height:14px;color:#1b9446;left:146.20px;transform:scaleX(0.9804);transform-origin:left 50%;"><svg width="6" height="6" viewBox="0 0 6 6" style="vertical-align:0px;margin-right:2.2px"><path d="M0.8 0 V3.8 H5" fill="none" stroke="#b7babe" stroke-width="0.9"/><path d="M3.8 2.6 L5.2 3.8 L3.8 5" fill="none" stroke="#b7babe" stroke-width="0.9"/></svg><span style="display:inline-block;background:#fce38c;color:#3a3a3a;border-radius:2px;font-size:8.4px;line-height:9px;padding:0 2.2px;vertical-align:0px;margin-right:2.4px;-webkit-text-stroke:0.1px currentColor">301</span><svg width="6" height="5" viewBox="0 0 6 5" style="vertical-align:1px;margin-right:2.2px"><path d="M0 2.5 H5 M3.5 1 L5 2.5 L3.5 4" fill="none" stroke="#b7babe" stroke-width="0.9"/></svg>https://<b style="letter-spacing:-0.2px">www.globalexplorers.org</b>/programs/leading<span style="letter-spacing:-1.1px">_</span>the<span style="letter-spacing:-1.1px">_</span>way/<svg width="5" height="4" viewBox="0 0 5 4" style="margin-left:3.2px;vertical-align:1px"><path d="M0.2 0.4 H4.8 L2.5 3.5 Z" fill="#1b9446"/></svg></div>
<div class="t" style="top:802.62px;font-size:10.0px;line-height:14px;color:#333;left:322.90px;width:600px;text-align:right;">0</div>
<div class="r" style="left:957.64px;top:801.22px;width:27.56px;height:14.80px;border:1px solid #d9dbde;border-radius:2px;box-sizing:border-box;background:#fff;"></div>
<div class="t" style="top:802.62px;font-size:10.0px;line-height:14px;color:#333;left:964.24px;">2</div>
<svg class="r" style="left:974.20px;top:807.42px" width="5.2" height="3.6" viewBox="0 0 5.2 3.6"><path d="M0.8 0.8 L2.6 2.7 L4.4 0.8" fill="none" stroke="#555" stroke-width="1.1" stroke-linecap="round" stroke-linejoin="round"/></svg>
<div class="t" style="top:802.62px;font-size:10.0px;line-height:14px;color:#333;left:425.50px;width:600px;text-align:right;">60</div>
<div class="r" style="left:1073.44px;top:801.22px;width:27.56px;height:14.80px;border:1px solid #d9dbde;border-radius:2px;box-sizing:border-box;background:#fff;"></div>
<div class="t" style="top:802.62px;font-size:10.0px;line-height:14px;color:#333;left:1080.04px;">2</div>
<svg class="r" style="left:1090.00px;top:807.42px" width="5.2" height="3.6" viewBox="0 0 5.2 3.6"><path d="M0.8 0.8 L2.6 2.7 L4.4 0.8" fill="none" stroke="#555" stroke-width="1.1" stroke-linecap="round" stroke-linejoin="round"/></svg>
<div class="t" style="top:802.62px;font-size:10.0px;line-height:14px;color:#3467bd;left:621.50px;width:600px;text-align:right;">2</div>
<div class="t" style="top:802.62px;font-size:10.0px;line-height:14px;color:#333;left:676.20px;width:600px;text-align:right;">0</div>
<div class="t" style="top:802.62px;font-size:10.0px;line-height:14px;color:#333;left:733.00px;width:600px;text-align:right;">0</div>
<div class="t" style="top:802.62px;font-size:10.0px;line-height:14px;color:#333;left:1699.50px;">3 Jun 2021</div>
<div class="t" style="top:814.62px;font-size:10.0px;line-height:14px;color:#333;left:1699.50px;">2 d ago</div>
<div class="t" style="top:802.62px;font-size:10.0px;line-height:14px;color:#333;left:1250.00px;width:600px;text-align:right;">13 d ago</div>
<svg class="r" style="left:1882.00px;top:805.82px" width="9" height="9" viewBox="0 0 9 9"><circle cx="3.7" cy="3.7" r="2.8" fill="none" stroke="#666" stroke-width="1.2"/><path d="M5.8 5.8 L8.2 8.2" stroke="#666" stroke-width="1.4" stroke-linecap="round"/></svg>
<div class="r" style="left:146.20px;top:833.55px;width:1751.00px;height:1.00px;background:#eceef0;"></div>
<div class="t" style="top:840.85px;font-size:10.2px;line-height:14px;color:#1b9446;left:146.70px;transform:scaleX(0.9804);transform-origin:left 50%;">https://<b style="letter-spacing:-0.2px">www.globalexplorers.org</b>/programs/leading<span style="letter-spacing:-1.1px">_</span>the<span style="letter-spacing:-1.1px">_</span>way/<svg width="5" height="4" viewBox="0 0 5 4" style="margin-left:3.2px;vertical-align:1px"><path d="M0.2 0.4 H4.8 L2.5 3.5 Z" fill="#1b9446"/></svg></div>
<div class="t" style="top:852.65px;font-size:10.2px;line-height:14px;color:#1b9446;left:146.20px;transform:scaleX(0.9804);transform-origin:left 50%;"><svg width="6" height="6" viewBox="0 0 6 6" style="vertical-align:0px;margin-right:2.2px"><path d="M0.8 0 V3.8 H5" fill="none" stroke="#b7babe" stroke-width="0.9"/><path d="M3.8 2.6 L5.2 3.8 L3.8 5" fill="none" stroke="#b7babe" stroke-width="0.9"/></svg><span style="display:inline-block;background:#fce38c;color:#3a3a3a;border-radius:2px;font-size:8.4px;line-height:9px;padding:0 2.2px;vertical-align:0px;margin-right:2.4px;-webkit-text-stroke:0.1px currentColor">301</span><svg width="6" height="5" viewBox="0 0 6 5" style="vertical-align:1px;margin-right:2.2px"><path d="M0 2.5 H5 M3.5 1 L5 2.5 L3.5 4" fill="none" stroke="#b7babe" stroke-width="0.9"/></svg>https://<b style="letter-spacing:-0.2px">globalexplorers.org</b>/programs/leading<span style="letter-spacing:-1.1px">_</span>the<span style="letter-spacing:-1.1px">_</span>way/<svg width="5" height="4" viewBox="0 0 5 4" style="margin-left:3.2px;vertical-align:1px"><path d="M0.2 0.4 H4.8 L2.5 3.5 Z" fill="#1b9446"/></svg></div>
<div class="r" style="left:861.90px;top:840.05px;width:24.30px;height:12.00px;background:#e0383e;border-radius:6px;"></div>
<div class="t" style="top:840.35px;font-size:8.2px;line-height:14px;color:#fff;letter-spacing:-0.2px;left:573.90px;width:600px;text-align:center;">Lost</div>
<div class="t" style="top:839.65px;font-size:10.0px;line-height:14px;color:#333;left:322.90px;width:600px;text-align:right;">0</div>
<div class="r" style="left:957.64px;top:838.25px;width:27.56px;height:14.80px;border:1px solid #d9dbde;border-radius:2px;box-sizing:border-box;background:#fff;"></div>
<div class="t" style="top:839.65px;font-size:10.0px;line-height:14px;color:#333;left:964.24px;">2</div>
<svg class="r" style="left:974.20px;top:844.45px" width="5.2" height="3.6" viewBox="0 0 5.2 3.6"><path d="M0.8 0.8 L2.6 2.7 L4.4 0.8" fill="none" stroke="#555" stroke-width="1.1" stroke-linecap="round" stroke-linejoin="round"/></svg>
<div class="t" style="top:839.65px;font-size:10.0px;line-height:14px;color:#333;left:425.50px;width:600px;text-align:right;">60</div>
<div class="r" style="left:1073.44px;top:838.25px;width:27.56px;height:14.80px;border:1px solid #d9dbde;border-radius:2px;box-sizing:border-box;background:#fff;"></div>
<div class="t" style="top:839.65px;font-size:10.0px;line-height:14px;color:#333;left:1080.04px;">2</div>
<svg class="r" style="left:1090.00px;top:844.45px" width="5.2" height="3.6" viewBox="0 0 5.2 3.6"><path d="M0.8 0.8 L2.6 2.7 L4.4 0.8" fill="none" stroke="#555" stroke-width="1.1" stroke-linecap="round" stroke-linejoin="round"/></svg>
<div class="t" style="top:839.65px;font-size:10.0px;line-height:14px;color:#e0383e;left:567.30px;width:600px;text-align:right;">−2</div>
<div class="t" style="top:839.65px;font-size:10.0px;line-height:14px;color:#3467bd;left:621.50px;width:600px;text-align:right;">2</div>
<div class="t" style="top:839.65px;font-size:10.0px;line-height:14px;color:#333;left:676.20px;width:600px;text-align:right;">0</div>
<div class="t" style="top:839.65px;font-size:10.0px;line-height:14px;color:#333;left:733.00px;width:600px;text-align:right;">0</div>
<div class="t" style="top:839.65px;font-size:10.0px;line-height:14px;color:#333;left:1699.50px;">6 Sep 2024</div>
<div class="t" style="top:851.65px;font-size:10.0px;line-height:14px;color:#333;left:1699.50px;">1 Nov 2025</div>
<div class="t" style="top:839.65px;font-size:10.0px;line-height:14px;color:#333;left:1250.00px;width:600px;text-align:right;">13 Nov 2025</div>
<svg class="r" style="left:1882.00px;top:842.85px" width="9" height="9" viewBox="0 0 9 9"><circle cx="3.7" cy="3.7" r="2.8" fill="none" stroke="#666" stroke-width="1.2"/><path d="M5.8 5.8 L8.2 8.2" stroke="#666" stroke-width="1.4" stroke-linecap="round"/></svg>
<div class="r" style="left:146.20px;top:870.58px;width:1751.00px;height:1.00px;background:#eceef0;"></div>
<div class="t" style="top:877.88px;font-size:10.2px;line-height:14px;color:#1b9446;left:146.70px;transform:scaleX(0.9804);transform-origin:left 50%;">http://<b style="letter-spacing:-0.2px">www.globalexplorers.org</b>/programs/leading<span style="letter-spacing:-1.1px">_</span>the<span style="letter-spacing:-1.1px">_</span>way/grandcanyon/<svg width="5" height="4" viewBox="0 0 5 4" style="margin-left:3.2px;vertical-align:1px"><path d="M0.2 0.4 H4.8 L2.5 3.5 Z" fill="#1b9446"/></svg></div>
<div class="t" style="top:889.68px;font-size:10.2px;line-height:14px;color:#1b9446;left:146.20px;transform:scaleX(0.9804);transform-origin:left 50%;"><svg width="6" height="6" viewBox="0 0 6 6" style="vertical-align:0px;margin-right:2.2px"><path d="M0.8 0 V3.8 H5" fill="none" stroke="#b7babe" stroke-width="0.9"/><path d="M3.8 2.6 L5.2 3.8 L3.8 5" fill="none" stroke="#b7babe" stroke-width="0.9"/></svg><span style="display:inline-block;background:#fce38c;color:#3a3a3a;border-radius:2px;font-size:8.4px;line-height:9px;padding:0 2.2px;vertical-align:0px;margin-right:2.4px;-webkit-text-stroke:0.1px currentColor">301</span><svg width="6" height="5" viewBox="0 0 6 5" style="vertical-align:1px;margin-right:2.2px"><path d="M0 2.5 H5 M3.5 1 L5 2.5 L3.5 4" fill="none" stroke="#b7babe" stroke-width="0.9"/></svg>https://<b style="letter-spacing:-0.2px">www.globalexplorers.org</b>/programs/leading<span style="letter-spacing:-1.1px">_</span>the<span style="letter-spacing:-1.1px">_</span>way/grandcanyon/<svg width="5" height="4" viewBox="0 0 5 4" style="margin-left:3.2px;vertical-align:1px"><path d="M0.2 0.4 H4.8 L2.5 3.5 Z" fill="#1b9446"/></svg></div>
<div class="t" style="top:876.68px;font-size:10.0px;line-height:14px;color:#333;left:322.90px;width:600px;text-align:right;">0</div>
<div class="r" style="left:957.64px;top:875.28px;width:27.56px;height:14.80px;border:1px solid #d9dbde;border-radius:2px;box-sizing:border-box;background:#fff;"></div>
<div class="t" style="top:876.68px;font-size:10.0px;line-height:14px;color:#333;left:964.24px;">2</div>
<svg class="r" style="left:974.20px;top:881.48px" width="5.2" height="3.6" viewBox="0 0 5.2 3.6"><path d="M0.8 0.8 L2.6 2.7 L4.4 0.8" fill="none" stroke="#555" stroke-width="1.1" stroke-linecap="round" stroke-linejoin="round"/></svg>
<div class="t" style="top:876.68px;font-size:10.0px;line-height:14px;color:#333;left:425.50px;width:600px;text-align:right;">79</div>
<div class="r" style="left:1073.44px;top:875.28px;width:27.56px;height:14.80px;border:1px solid #d9dbde;border-radius:2px;box-sizing:border-box;background:#fff;"></div>
<div class="t" style="top:876.68px;font-size:10.0px;line-height:14px;color:#333;left:1080.04px;">3</div>
<svg class="r" style="left:1090.00px;top:881.48px" width="5.2" height="3.6" viewBox="0 0 5.2 3.6"><path d="M0.8 0.8 L2.6 2.7 L4.4 0.8" fill="none" stroke="#555" stroke-width="1.1" stroke-linecap="round" stroke-linejoin="round"/></svg>
<div class="t" style="top:876.68px;font-size:10.0px;line-height:14px;color:#2ea052;left:534.30px;width:600px;text-align:right;">+1</div>
<div class="t" style="top:876.68px;font-size:10.0px;line-height:14px;color:#3467bd;left:621.50px;width:600px;text-align:right;">3</div>
<div class="t" style="top:876.68px;font-size:10.0px;line-height:14px;color:#333;left:676.20px;width:600px;text-align:right;">0</div>
<div class="t" style="top:876.68px;font-size:10.0px;line-height:14px;color:#333;left:733.00px;width:600px;text-align:right;">0</div>
<div class="t" style="top:876.68px;font-size:10.0px;line-height:14px;color:#333;left:1699.50px;">13 Oct 2024</div>
<div class="t" style="top:888.68px;font-size:10.0px;line-height:14px;color:#333;left:1699.50px;">2 d ago</div>
<div class="t" style="top:876.68px;font-size:10.0px;line-height:14px;color:#333;left:1250.00px;width:600px;text-align:right;">13 d ago</div>
<svg class="r" style="left:1882.00px;top:879.88px" width="9" height="9" viewBox="0 0 9 9"><circle cx="3.7" cy="3.7" r="2.8" fill="none" stroke="#666" stroke-width="1.2"/><path d="M5.8 5.8 L8.2 8.2" stroke="#666" stroke-width="1.4" stroke-linecap="round"/></svg>
<div class="r" style="left:146.20px;top:907.61px;width:1751.00px;height:1.00px;background:#eceef0;"></div>
<div class="t" style="top:914.91px;font-size:10.2px;line-height:14px;color:#1b9446;left:146.70px;transform:scaleX(0.9804);transform-origin:left 50%;">https://<b style="letter-spacing:-0.2px">www.globalexplorers.org</b>/programs/leading<span style="letter-spacing:-1.1px">_</span>the<span style="letter-spacing:-1.1px">_</span>way/grandcanyon/<svg width="5" height="4" viewBox="0 0 5 4" style="margin-left:3.2px;vertical-align:1px"><path d="M0.2 0.4 H4.8 L2.5 3.5 Z" fill="#1b9446"/></svg></div>
<div class="t" style="top:926.71px;font-size:10.2px;line-height:14px;color:#1b9446;left:146.20px;transform:scaleX(0.9804);transform-origin:left 50%;"><svg width="6" height="6" viewBox="0 0 6 6" style="vertical-align:0px;margin-right:2.2px"><path d="M0.8 0 V3.8 H5" fill="none" stroke="#b7babe" stroke-width="0.9"/><path d="M3.8 2.6 L5.2 3.8 L3.8 5" fill="none" stroke="#b7babe" stroke-width="0.9"/></svg><span style="display:inline-block;background:#fce38c;color:#3a3a3a;border-radius:2px;font-size:8.4px;line-height:9px;padding:0 2.2px;vertical-align:0px;margin-right:2.4px;-webkit-text-stroke:0.1px currentColor">301</span><svg width="6" height="5" viewBox="0 0 6 5" style="vertical-align:1px;margin-right:2.2px"><path d="M0 2.5 H5 M3.5 1 L5 2.5 L3.5 4" fill="none" stroke="#b7babe" stroke-width="0.9"/></svg>https://<b style="letter-spacing:-0.2px">globalexplorers.org</b>/programs/leading<span style="letter-spacing:-1.1px">_</span>the<span style="letter-spacing:-1.1px">_</span>way/grandcanyon/<svg width="5" height="4" viewBox="0 0 5 4" style="margin-left:3.2px;vertical-align:1px"><path d="M0.2 0.4 H4.8 L2.5 3.5 Z" fill="#1b9446"/></svg></div>
<div class="r" style="left:861.90px;top:914.11px;width:24.30px;height:12.00px;background:#27a055;border-radius:6px;"></div>
<div class="t" style="top:914.41px;font-size:8.2px;line-height:14px;color:#fff;letter-spacing:-0.2px;left:573.90px;width:600px;text-align:center;">New</div>
<div class="t" style="top:913.71px;font-size:10.0px;line-height:14px;color:#333;left:322.90px;width:600px;text-align:right;">0</div>
<div class="r" style="left:957.64px;top:912.31px;width:27.56px;height:14.80px;border:1px solid #d9dbde;border-radius:2px;box-sizing:border-box;background:#fff;"></div>
<div class="t" style="top:913.71px;font-size:10.0px;line-height:14px;color:#333;left:964.24px;">2</div>
<svg class="r" style="left:974.20px;top:918.51px" width="5.2" height="3.6" viewBox="0 0 5.2 3.6"><path d="M0.8 0.8 L2.6 2.7 L4.4 0.8" fill="none" stroke="#555" stroke-width="1.1" stroke-linecap="round" stroke-linejoin="round"/></svg>
<div class="t" style="top:913.71px;font-size:10.0px;line-height:14px;color:#333;left:425.50px;width:600px;text-align:right;">79</div>
<div class="r" style="left:1073.44px;top:912.31px;width:27.56px;height:14.80px;border:1px solid #d9dbde;border-radius:2px;box-sizing:border-box;background:#fff;"></div>
<div class="t" style="top:913.71px;font-size:10.0px;line-height:14px;color:#333;left:1080.04px;">3</div>
<svg class="r" style="left:1090.00px;top:918.51px" width="5.2" height="3.6" viewBox="0 0 5.2 3.6"><path d="M0.8 0.8 L2.6 2.7 L4.4 0.8" fill="none" stroke="#555" stroke-width="1.1" stroke-linecap="round" stroke-linejoin="round"/></svg>
<div class="t" style="top:913.71px;font-size:10.0px;line-height:14px;color:#2ea052;left:534.30px;width:600px;text-align:right;">+3</div>
<div class="t" style="top:913.71px;font-size:10.0px;line-height:14px;color:#e0383e;left:567.30px;width:600px;text-align:right;">−2</div>
<div class="t" style="top:913.71px;font-size:10.0px;line-height:14px;color:#3467bd;left:621.50px;width:600px;text-align:right;">3</div>
<div class="t" style="top:913.71px;font-size:10.0px;line-height:14px;color:#333;left:676.20px;width:600px;text-align:right;">0</div>
<div class="t" style="top:913.71px;font-size:10.0px;line-height:14px;color:#333;left:733.00px;width:600px;text-align:right;">0</div>
<div class="t" style="top:913.71px;font-size:10.0px;line-height:14px;color:#333;left:1699.50px;">6 Apr 2025</div>
<div class="t" style="top:925.71px;font-size:10.0px;line-height:14px;color:#333;left:1699.50px;">26 Oct 2025</div>
<div class="t" style="top:913.71px;font-size:10.0px;line-height:14px;color:#333;left:1250.00px;width:600px;text-align:right;">13 Nov 2025</div>
<svg class="r" style="left:1882.00px;top:916.91px" width="9" height="9" viewBox="0 0 9 9"><circle cx="3.7" cy="3.7" r="2.8" fill="none" stroke="#666" stroke-width="1.2"/><path d="M5.8 5.8 L8.2 8.2" stroke="#666" stroke-width="1.4" stroke-linecap="round"/></svg>
<div class="r" style="left:146.20px;top:944.64px;width:1751.00px;height:1.00px;background:#eceef0;"></div>
<div class="t" style="top:951.94px;font-size:10.2px;line-height:14px;color:#1b9446;left:146.70px;transform:scaleX(0.9804);transform-origin:left 50%;">http://<b style="letter-spacing:-0.2px">www.globalexplorers.org</b>/programs/learning<span style="letter-spacing:-1.1px">_</span>afar/<svg width="5" height="4" viewBox="0 0 5 4" style="margin-left:3.2px;vertical-align:1px"><path d="M0.2 0.4 H4.8 L2.5 3.5 Z" fill="#1b9446"/></svg></div>
<div class="t" style="top:963.74px;font-size:10.2px;line-height:14px;color:#1b9446;left:146.20px;transform:scaleX(0.9804);transform-origin:left 50%;"><svg width="6" height="6" viewBox="0 0 6 6" style="vertical-align:0px;margin-right:2.2px"><path d="M0.8 0 V3.8 H5" fill="none" stroke="#b7babe" stroke-width="0.9"/><path d="M3.8 2.6 L5.2 3.8 L3.8 5" fill="none" stroke="#b7babe" stroke-width="0.9"/></svg><span style="display:inline-block;background:#fce38c;color:#3a3a3a;border-radius:2px;font-size:8.4px;line-height:9px;padding:0 2.2px;vertical-align:0px;margin-right:2.4px;-webkit-text-stroke:0.1px currentColor">301</span><svg width="6" height="5" viewBox="0 0 6 5" style="vertical-align:1px;margin-right:2.2px"><path d="M0 2.5 H5 M3.5 1 L5 2.5 L3.5 4" fill="none" stroke="#b7babe" stroke-width="0.9"/></svg>https://<b style="letter-spacing:-0.2px">www.globalexplorers.org</b>/programs/learning<span style="letter-spacing:-1.1px">_</span>afar/<svg width="5" height="4" viewBox="0 0 5 4" style="margin-left:3.2px;vertical-align:1px"><path d="M0.2 0.4 H4.8 L2.5 3.5 Z" fill="#1b9446"/></svg></div>
<div class="t" style="top:950.74px;font-size:10.0px;line-height:14px;color:#333;left:322.90px;width:600px;text-align:right;">0</div>
<div class="r" style="left:957.64px;top:949.34px;width:27.56px;height:14.80px;border:1px solid #d9dbde;border-radius:2px;box-sizing:border-box;background:#fff;"></div>
<div class="t" style="top:950.74px;font-size:10.0px;line-height:14px;color:#333;left:964.24px;">2</div>
<svg class="r" style="left:974.20px;top:955.54px" width="5.2" height="3.6" viewBox="0 0 5.2 3.6"><path d="M0.8 0.8 L2.6 2.7 L4.4 0.8" fill="none" stroke="#555" stroke-width="1.1" stroke-linecap="round" stroke-linejoin="round"/></svg>
<div class="t" style="top:950.74px;font-size:10.0px;line-height:14px;color:#333;left:425.50px;width:600px;text-align:right;">64</div>
<div class="r" style="left:1073.44px;top:949.34px;width:27.56px;height:14.80px;border:1px solid #d9dbde;border-radius:2px;box-sizing:border-box;background:#fff;"></div>
<div class="t" style="top:950.74px;font-size:10.0px;line-height:14px;color:#333;left:1080.04px;">2</div>
<svg class="r" style="left:1090.00px;top:955.54px" width="5.2" height="3.6" viewBox="0 0 5.2 3.6"><path d="M0.8 0.8 L2.6 2.7 L4.4 0.8" fill="none" stroke="#555" stroke-width="1.1" stroke-linecap="round" stroke-linejoin="round"/></svg>
<div class="t" style="top:950.74px;font-size:10.0px;line-height:14px;color:#3467bd;left:621.50px;width:600px;text-align:right;">2</div>
<div class="t" style="top:950.74px;font-size:10.0px;line-height:14px;color:#333;left:676.20px;width:600px;text-align:right;">0</div>
<div class="t" style="top:950.74px;font-size:10.0px;line-height:14px;color:#333;left:733.00px;width:600px;text-align:right;">0</div>
<div class="t" style="top:950.74px;font-size:10.0px;line-height:14px;color:#333;left:1699.50px;">11 Sep 2020</div>
<div class="t" style="top:962.74px;font-size:10.0px;line-height:14px;color:#333;left:1699.50px;">13 Nov 2025</div>
<div class="t" style="top:950.74px;font-size:10.0px;line-height:14px;color:#333;left:1250.00px;width:600px;text-align:right;">13 Nov 2025</div>
<svg class="r" style="left:1882.00px;top:953.94px" width="9" height="9" viewBox="0 0 9 9"><circle cx="3.7" cy="3.7" r="2.8" fill="none" stroke="#666" stroke-width="1.2"/><path d="M5.8 5.8 L8.2 8.2" stroke="#666" stroke-width="1.4" stroke-linecap="round"/></svg>
<div class="r" style="left:0.00px;top:958.50px;width:1920.00px;height:2.00px;background:#e9eaec;"></div>
<div class="r" style="left:1885.00px;top:921.80px;width:26.80px;height:26.80px;background:#2e3b57;border-radius:50%;box-shadow:0 0 2px rgba(0,0,0,0.25);"></div>
<div class="t" style="top:928.30px;font-size:16.5px;line-height:14px;color:#fff;left:1598.40px;width:600px;text-align:center;-webkit-text-stroke:0.5px currentColor;">?</div>
<div class="r" style="left:1916.00px;top:9.00px;width:2.00px;height:397.00px;background:#8b8b8b;border-radius:1px;"></div>
</div></body></html>
